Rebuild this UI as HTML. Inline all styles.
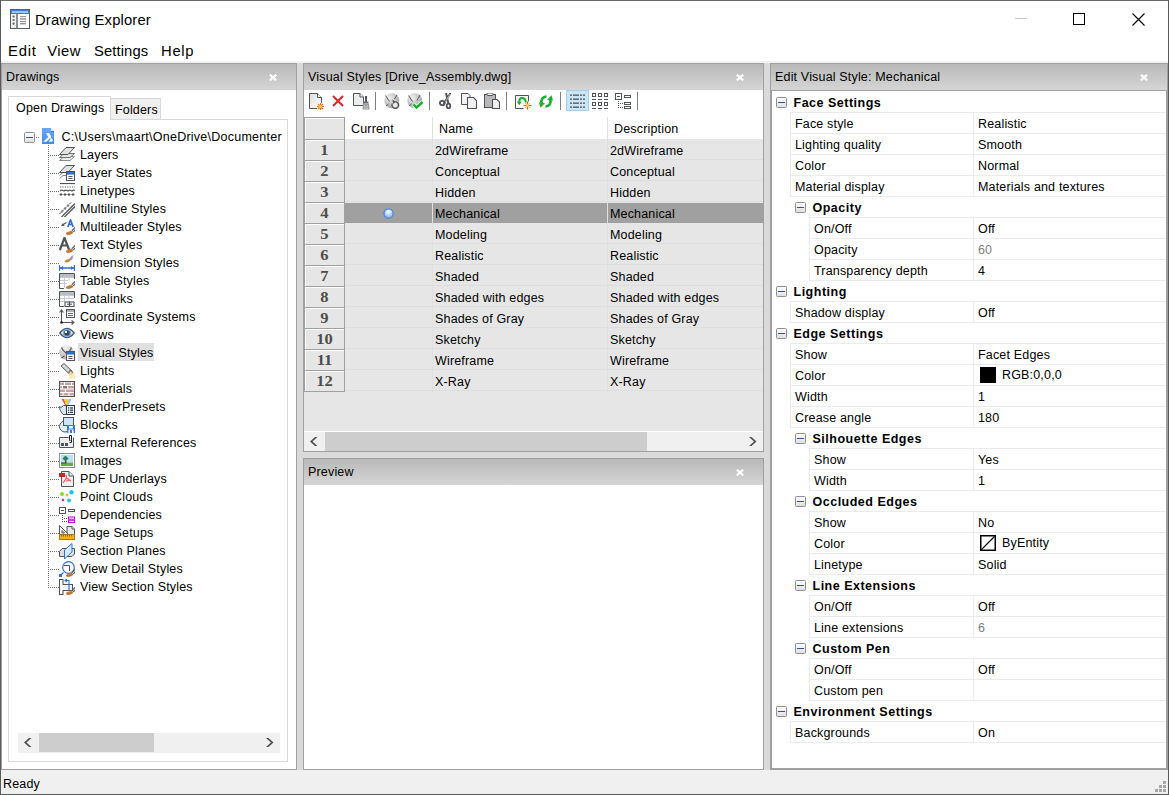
<!DOCTYPE html>
<html><head><meta charset="utf-8"><style>
html,body{margin:0;padding:0;width:1169px;height:795px;overflow:hidden;background:#fff;}
body{position:relative;font-family:"Liberation Sans", sans-serif;}
div{position:absolute;}
.t{white-space:nowrap;}
</style></head><body>
<div style="left:0px;top:0px;width:1169px;height:795px;background:#fff;"></div>
<svg style="position:absolute;left:10px;top:9px" width="20" height="20" viewBox="0 0 20 20"><rect x="0.5" y="0.5" width="19" height="19" fill="#f0f0f0" stroke="#5a5f63"/>
<rect x="1" y="1" width="18" height="4" fill="#3d7fd9"/><rect x="2" y="2" width="16" height="2" fill="#9cc2f5"/>
<rect x="6" y="5" width="2" height="14" fill="#8a8f93"/><rect x="8" y="5" width="11" height="14" fill="#fff"/>
<circle cx="3.6" cy="7.5" r="1.1" fill="#5a5f63"/><circle cx="3.6" cy="11" r="1.1" fill="#5a5f63"/><circle cx="3.6" cy="14.7" r="1.1" fill="#5a5f63"/>
<rect x="10" y="7" width="6" height="1.2" fill="#999"/><rect x="10" y="9.5" width="6" height="1" fill="#666"/><rect x="10" y="12" width="6" height="1.2" fill="#999"/><rect x="10" y="14.3" width="6" height="1" fill="#666"/></svg>
<div class="t" style="left:35px;top:13.47px;font-size:14.8px;line-height:14.8px;color:#000;letter-spacing:0.15px;font-family:"Liberation Sans", sans-serif;">Drawing Explorer</div>
<div style="left:1015px;top:18px;width:12px;height:1px;background:#c6c6c6;"></div>
<div style="left:1073px;top:13px;width:12px;height:12px;background:transparent;border:1px solid #000;box-sizing:border-box;"></div>
<svg style="position:absolute;left:1132px;top:13px" width="13" height="13" viewBox="0 0 13 13"><path d="M0.5 0.5 L12.5 12.5 M12.5 0.5 L0.5 12.5" stroke="#000" stroke-width="1.1"/></svg>
<div class="t" style="left:8px;top:44.07px;font-size:14.8px;line-height:14.8px;color:#000;letter-spacing:0.8px;font-family:"Liberation Sans", sans-serif;">Edit</div>
<div class="t" style="left:47.2px;top:44.07px;font-size:14.8px;line-height:14.8px;color:#000;letter-spacing:0.5px;font-family:"Liberation Sans", sans-serif;">View</div>
<div class="t" style="left:94px;top:44.07px;font-size:14.8px;line-height:14.8px;color:#000;letter-spacing:0.1px;font-family:"Liberation Sans", sans-serif;">Settings</div>
<div class="t" style="left:161px;top:44.07px;font-size:14.8px;line-height:14.8px;color:#000;letter-spacing:0.7px;font-family:"Liberation Sans", sans-serif;">Help</div>
<div style="left:0px;top:61px;width:1169px;height:2px;background:#f2f2f2;"></div>
<div style="left:0px;top:63px;width:1169px;height:707px;background:#dadada;"></div>
<div style="left:0px;top:770px;width:1169px;height:24px;background:#f0f0f0;"></div>
<div class="t" style="left:3px;top:778.22px;font-size:12.5px;line-height:12.5px;color:#000;letter-spacing:0.17px;font-family:"Liberation Sans", sans-serif;">Ready</div>
<div style="left:1163px;top:781px;width:3px;height:3px;background:#a8a8a8;"></div>
<div style="left:1159px;top:785px;width:3px;height:3px;background:#a8a8a8;"></div>
<div style="left:1163px;top:785px;width:3px;height:3px;background:#a8a8a8;"></div>
<div style="left:1155px;top:789px;width:3px;height:3px;background:#a8a8a8;"></div>
<div style="left:1159px;top:789px;width:3px;height:3px;background:#a8a8a8;"></div>
<div style="left:1163px;top:789px;width:3px;height:3px;background:#a8a8a8;"></div>
<div style="left:0px;top:0px;width:1169px;height:1px;background:#6b6b6b;"></div>
<div style="left:0px;top:0px;width:1px;height:795px;background:#5a5a5a;"></div>
<div style="left:1168px;top:0px;width:1px;height:795px;background:#5a5a5a;"></div>
<div style="left:0px;top:794px;width:1169px;height:1px;background:#5a5a5a;"></div>
<div style="left:1px;top:63px;width:296px;height:707px;background:#a0a0a0;"></div>
<div style="left:2px;top:63px;width:294px;height:706px;background:#fff;"></div>
<div style="left:2px;top:63px;width:294px;height:1px;background:#a0a0a0;"></div>
<div style="left:2px;top:64px;width:294px;height:26px;background:linear-gradient(#b9b9b9,#d5d5d5);"></div>
<div class="t" style="left:6px;top:71.42px;font-size:12.5px;line-height:12.5px;color:#000;letter-spacing:0.17px;font-family:"Liberation Sans", sans-serif;">Drawings</div>
<svg style="position:absolute;left:269px;top:74px" width="8" height="7" viewBox="0 0 8 7"><path d="M0.8 0.6 L7.2 6.4 M7.2 0.6 L0.8 6.4" stroke="#fff" stroke-width="2.1"/></svg>
<div style="left:8px;top:119px;width:280px;height:643px;background:#fff;border:1px solid #d9d9d9;box-sizing:border-box;"></div>
<div style="left:110px;top:98px;width:51px;height:22px;background:#f0f0f0;border:1px solid #d9d9d9;box-sizing:border-box;"></div>
<div style="left:8px;top:96px;width:103px;height:24px;background:#fff;border:1px solid #d9d9d9;border-bottom:none;box-sizing:border-box;"></div>
<div class="t" style="left:16px;top:102.02px;font-size:12.5px;line-height:12.5px;color:#000;letter-spacing:0.17px;font-family:"Liberation Sans", sans-serif;">Open Drawings</div>
<div class="t" style="left:115px;top:104.32px;font-size:12.5px;line-height:12.5px;color:#000;letter-spacing:0.17px;font-family:"Liberation Sans", sans-serif;">Folders</div>
<div style="left:24px;top:132px;width:11px;height:11px;background:linear-gradient(#fdfdfd,#e0e0e0);border:1px solid #8f8f8f;border-radius:1.5px;box-sizing:border-box;"></div>
<div style="left:26px;top:137px;width:7px;height:1.3px;background:#3b4da0;"></div>
<div style="left:36px;top:137px;width:1px;height:1px;background:#808080;"></div>
<div style="left:38px;top:137px;width:1px;height:1px;background:#808080;"></div>
<svg style="position:absolute;left:42px;top:128px" width="12" height="16" viewBox="0 0 12 16"><defs><linearGradient id="bg1" x1="0" y1="0" x2="0" y2="1"><stop offset="0" stop-color="#69a6f7"/><stop offset="1" stop-color="#3f8cf2"/></linearGradient></defs><path d="M0 0 H9 L12 3 V16 H0 Z" fill="url(#bg1)"/><path d="M9 0 L12 3 H9 Z" fill="#f4efe6"/><path d="M9 3 H12 V4 H9 Z" fill="#2f7ae8"/><path d="M4 5 L7.3 5 L9.3 9 L4.4 13.8 L1.2 13.8 L6.3 9 Z" fill="#fff"/><path d="M8.3 10.5 L10 10.5 L10.8 12.5 L10 13.8 L7 13.8 Z" fill="#fff"/></svg>
<div class="t" style="left:61.5px;top:130.82px;font-size:12.5px;line-height:12.5px;color:#000;letter-spacing:0.25px;font-family:"Liberation Sans", sans-serif;">C:\Users\maart\OneDrive\Documenter</div>
<svg style="position:absolute;left:48px;top:145px" width="1" height="443" viewBox="0 0 1 443"><g fill="#707070"><rect x="0" y="0" width="1" height="1"/><rect x="0" y="2" width="1" height="1"/><rect x="0" y="4" width="1" height="1"/><rect x="0" y="6" width="1" height="1"/><rect x="0" y="8" width="1" height="1"/><rect x="0" y="10" width="1" height="1"/><rect x="0" y="12" width="1" height="1"/><rect x="0" y="14" width="1" height="1"/><rect x="0" y="16" width="1" height="1"/><rect x="0" y="18" width="1" height="1"/><rect x="0" y="20" width="1" height="1"/><rect x="0" y="22" width="1" height="1"/><rect x="0" y="24" width="1" height="1"/><rect x="0" y="26" width="1" height="1"/><rect x="0" y="28" width="1" height="1"/><rect x="0" y="30" width="1" height="1"/><rect x="0" y="32" width="1" height="1"/><rect x="0" y="34" width="1" height="1"/><rect x="0" y="36" width="1" height="1"/><rect x="0" y="38" width="1" height="1"/><rect x="0" y="40" width="1" height="1"/><rect x="0" y="42" width="1" height="1"/><rect x="0" y="44" width="1" height="1"/><rect x="0" y="46" width="1" height="1"/><rect x="0" y="48" width="1" height="1"/><rect x="0" y="50" width="1" height="1"/><rect x="0" y="52" width="1" height="1"/><rect x="0" y="54" width="1" height="1"/><rect x="0" y="56" width="1" height="1"/><rect x="0" y="58" width="1" height="1"/><rect x="0" y="60" width="1" height="1"/><rect x="0" y="62" width="1" height="1"/><rect x="0" y="64" width="1" height="1"/><rect x="0" y="66" width="1" height="1"/><rect x="0" y="68" width="1" height="1"/><rect x="0" y="70" width="1" height="1"/><rect x="0" y="72" width="1" height="1"/><rect x="0" y="74" width="1" height="1"/><rect x="0" y="76" width="1" height="1"/><rect x="0" y="78" width="1" height="1"/><rect x="0" y="80" width="1" height="1"/><rect x="0" y="82" width="1" height="1"/><rect x="0" y="84" width="1" height="1"/><rect x="0" y="86" width="1" height="1"/><rect x="0" y="88" width="1" height="1"/><rect x="0" y="90" width="1" height="1"/><rect x="0" y="92" width="1" height="1"/><rect x="0" y="94" width="1" height="1"/><rect x="0" y="96" width="1" height="1"/><rect x="0" y="98" width="1" height="1"/><rect x="0" y="100" width="1" height="1"/><rect x="0" y="102" width="1" height="1"/><rect x="0" y="104" width="1" height="1"/><rect x="0" y="106" width="1" height="1"/><rect x="0" y="108" width="1" height="1"/><rect x="0" y="110" width="1" height="1"/><rect x="0" y="112" width="1" height="1"/><rect x="0" y="114" width="1" height="1"/><rect x="0" y="116" width="1" height="1"/><rect x="0" y="118" width="1" height="1"/><rect x="0" y="120" width="1" height="1"/><rect x="0" y="122" width="1" height="1"/><rect x="0" y="124" width="1" height="1"/><rect x="0" y="126" width="1" height="1"/><rect x="0" y="128" width="1" height="1"/><rect x="0" y="130" width="1" height="1"/><rect x="0" y="132" width="1" height="1"/><rect x="0" y="134" width="1" height="1"/><rect x="0" y="136" width="1" height="1"/><rect x="0" y="138" width="1" height="1"/><rect x="0" y="140" width="1" height="1"/><rect x="0" y="142" width="1" height="1"/><rect x="0" y="144" width="1" height="1"/><rect x="0" y="146" width="1" height="1"/><rect x="0" y="148" width="1" height="1"/><rect x="0" y="150" width="1" height="1"/><rect x="0" y="152" width="1" height="1"/><rect x="0" y="154" width="1" height="1"/><rect x="0" y="156" width="1" height="1"/><rect x="0" y="158" width="1" height="1"/><rect x="0" y="160" width="1" height="1"/><rect x="0" y="162" width="1" height="1"/><rect x="0" y="164" width="1" height="1"/><rect x="0" y="166" width="1" height="1"/><rect x="0" y="168" width="1" height="1"/><rect x="0" y="170" width="1" height="1"/><rect x="0" y="172" width="1" height="1"/><rect x="0" y="174" width="1" height="1"/><rect x="0" y="176" width="1" height="1"/><rect x="0" y="178" width="1" height="1"/><rect x="0" y="180" width="1" height="1"/><rect x="0" y="182" width="1" height="1"/><rect x="0" y="184" width="1" height="1"/><rect x="0" y="186" width="1" height="1"/><rect x="0" y="188" width="1" height="1"/><rect x="0" y="190" width="1" height="1"/><rect x="0" y="192" width="1" height="1"/><rect x="0" y="194" width="1" height="1"/><rect x="0" y="196" width="1" height="1"/><rect x="0" y="198" width="1" height="1"/><rect x="0" y="200" width="1" height="1"/><rect x="0" y="202" width="1" height="1"/><rect x="0" y="204" width="1" height="1"/><rect x="0" y="206" width="1" height="1"/><rect x="0" y="208" width="1" height="1"/><rect x="0" y="210" width="1" height="1"/><rect x="0" y="212" width="1" height="1"/><rect x="0" y="214" width="1" height="1"/><rect x="0" y="216" width="1" height="1"/><rect x="0" y="218" width="1" height="1"/><rect x="0" y="220" width="1" height="1"/><rect x="0" y="222" width="1" height="1"/><rect x="0" y="224" width="1" height="1"/><rect x="0" y="226" width="1" height="1"/><rect x="0" y="228" width="1" height="1"/><rect x="0" y="230" width="1" height="1"/><rect x="0" y="232" width="1" height="1"/><rect x="0" y="234" width="1" height="1"/><rect x="0" y="236" width="1" height="1"/><rect x="0" y="238" width="1" height="1"/><rect x="0" y="240" width="1" height="1"/><rect x="0" y="242" width="1" height="1"/><rect x="0" y="244" width="1" height="1"/><rect x="0" y="246" width="1" height="1"/><rect x="0" y="248" width="1" height="1"/><rect x="0" y="250" width="1" height="1"/><rect x="0" y="252" width="1" height="1"/><rect x="0" y="254" width="1" height="1"/><rect x="0" y="256" width="1" height="1"/><rect x="0" y="258" width="1" height="1"/><rect x="0" y="260" width="1" height="1"/><rect x="0" y="262" width="1" height="1"/><rect x="0" y="264" width="1" height="1"/><rect x="0" y="266" width="1" height="1"/><rect x="0" y="268" width="1" height="1"/><rect x="0" y="270" width="1" height="1"/><rect x="0" y="272" width="1" height="1"/><rect x="0" y="274" width="1" height="1"/><rect x="0" y="276" width="1" height="1"/><rect x="0" y="278" width="1" height="1"/><rect x="0" y="280" width="1" height="1"/><rect x="0" y="282" width="1" height="1"/><rect x="0" y="284" width="1" height="1"/><rect x="0" y="286" width="1" height="1"/><rect x="0" y="288" width="1" height="1"/><rect x="0" y="290" width="1" height="1"/><rect x="0" y="292" width="1" height="1"/><rect x="0" y="294" width="1" height="1"/><rect x="0" y="296" width="1" height="1"/><rect x="0" y="298" width="1" height="1"/><rect x="0" y="300" width="1" height="1"/><rect x="0" y="302" width="1" height="1"/><rect x="0" y="304" width="1" height="1"/><rect x="0" y="306" width="1" height="1"/><rect x="0" y="308" width="1" height="1"/><rect x="0" y="310" width="1" height="1"/><rect x="0" y="312" width="1" height="1"/><rect x="0" y="314" width="1" height="1"/><rect x="0" y="316" width="1" height="1"/><rect x="0" y="318" width="1" height="1"/><rect x="0" y="320" width="1" height="1"/><rect x="0" y="322" width="1" height="1"/><rect x="0" y="324" width="1" height="1"/><rect x="0" y="326" width="1" height="1"/><rect x="0" y="328" width="1" height="1"/><rect x="0" y="330" width="1" height="1"/><rect x="0" y="332" width="1" height="1"/><rect x="0" y="334" width="1" height="1"/><rect x="0" y="336" width="1" height="1"/><rect x="0" y="338" width="1" height="1"/><rect x="0" y="340" width="1" height="1"/><rect x="0" y="342" width="1" height="1"/><rect x="0" y="344" width="1" height="1"/><rect x="0" y="346" width="1" height="1"/><rect x="0" y="348" width="1" height="1"/><rect x="0" y="350" width="1" height="1"/><rect x="0" y="352" width="1" height="1"/><rect x="0" y="354" width="1" height="1"/><rect x="0" y="356" width="1" height="1"/><rect x="0" y="358" width="1" height="1"/><rect x="0" y="360" width="1" height="1"/><rect x="0" y="362" width="1" height="1"/><rect x="0" y="364" width="1" height="1"/><rect x="0" y="366" width="1" height="1"/><rect x="0" y="368" width="1" height="1"/><rect x="0" y="370" width="1" height="1"/><rect x="0" y="372" width="1" height="1"/><rect x="0" y="374" width="1" height="1"/><rect x="0" y="376" width="1" height="1"/><rect x="0" y="378" width="1" height="1"/><rect x="0" y="380" width="1" height="1"/><rect x="0" y="382" width="1" height="1"/><rect x="0" y="384" width="1" height="1"/><rect x="0" y="386" width="1" height="1"/><rect x="0" y="388" width="1" height="1"/><rect x="0" y="390" width="1" height="1"/><rect x="0" y="392" width="1" height="1"/><rect x="0" y="394" width="1" height="1"/><rect x="0" y="396" width="1" height="1"/><rect x="0" y="398" width="1" height="1"/><rect x="0" y="400" width="1" height="1"/><rect x="0" y="402" width="1" height="1"/><rect x="0" y="404" width="1" height="1"/><rect x="0" y="406" width="1" height="1"/><rect x="0" y="408" width="1" height="1"/><rect x="0" y="410" width="1" height="1"/><rect x="0" y="412" width="1" height="1"/><rect x="0" y="414" width="1" height="1"/><rect x="0" y="416" width="1" height="1"/><rect x="0" y="418" width="1" height="1"/><rect x="0" y="420" width="1" height="1"/><rect x="0" y="422" width="1" height="1"/><rect x="0" y="424" width="1" height="1"/><rect x="0" y="426" width="1" height="1"/><rect x="0" y="428" width="1" height="1"/><rect x="0" y="430" width="1" height="1"/><rect x="0" y="432" width="1" height="1"/><rect x="0" y="434" width="1" height="1"/><rect x="0" y="436" width="1" height="1"/><rect x="0" y="438" width="1" height="1"/><rect x="0" y="440" width="1" height="1"/><rect x="0" y="442" width="1" height="1"/></g></svg>
<div style="left:50px;top:155px;width:1px;height:1px;background:#707070;"></div>
<div style="left:52px;top:155px;width:1px;height:1px;background:#707070;"></div>
<div style="left:54px;top:155px;width:1px;height:1px;background:#707070;"></div>
<div style="left:56px;top:155px;width:1px;height:1px;background:#707070;"></div>
<div style="left:58px;top:155px;width:1px;height:1px;background:#707070;"></div>
<svg style="position:absolute;left:59px;top:147px" width="16" height="16" viewBox="0 0 16 16"><path d="M0.5 13.5 L5 9.5 H15.5 L11 13.5 Z" fill="#ececec" stroke="#8a8d90"/><path d="M0.5 10.5 L5 6.5 H15.5 L11 10.5 Z" fill="#e6e6e6" stroke="#6f7276"/><path d="M0.5 7.5 L7 0.5 H15.5 L9 7.5 Z" fill="#e2e2e2" stroke="#505459"/></svg>
<div class="t" style="left:80px;top:149.42px;font-size:12.5px;line-height:12.5px;color:#000;letter-spacing:0.17px;font-family:"Liberation Sans", sans-serif;">Layers</div>
<div style="left:50px;top:173px;width:1px;height:1px;background:#707070;"></div>
<div style="left:52px;top:173px;width:1px;height:1px;background:#707070;"></div>
<div style="left:54px;top:173px;width:1px;height:1px;background:#707070;"></div>
<div style="left:56px;top:173px;width:1px;height:1px;background:#707070;"></div>
<div style="left:58px;top:173px;width:1px;height:1px;background:#707070;"></div>
<svg style="position:absolute;left:59px;top:165px" width="16" height="16" viewBox="0 0 16 16"><path d="M0.5 13.5 L4 10.5 H7 M0.5 10.5 L4 7.5 H7" fill="none" stroke="#8a8d90"/><path d="M0.5 7.5 L7 0.5 H15.5 L9 7.5 Z" fill="#e2e2e2" stroke="#505459"/><rect x="7.5" y="6.5" width="8" height="9" fill="#fff" stroke="#505459"/><rect x="8" y="7" width="7" height="2.6" fill="#2f73d6"/><path d="M9.5 11.5 H13.5 M9.5 13.5 H13.5" stroke="#505459" stroke-width="1"/></svg>
<div class="t" style="left:80px;top:167.42px;font-size:12.5px;line-height:12.5px;color:#000;letter-spacing:0.17px;font-family:"Liberation Sans", sans-serif;">Layer States</div>
<div style="left:50px;top:191px;width:1px;height:1px;background:#707070;"></div>
<div style="left:52px;top:191px;width:1px;height:1px;background:#707070;"></div>
<div style="left:54px;top:191px;width:1px;height:1px;background:#707070;"></div>
<div style="left:56px;top:191px;width:1px;height:1px;background:#707070;"></div>
<div style="left:58px;top:191px;width:1px;height:1px;background:#707070;"></div>
<svg style="position:absolute;left:59px;top:183px" width="16" height="16" viewBox="0 0 16 16"><path d="M1 0.5 H16" stroke="#505459" stroke-width="1.2"/><path d="M1 4 H16" stroke="#505459" stroke-dasharray="1.2 1.2"/><path d="M1 8 Q2.5 6.5 4 7.5 L5 8 Q6.5 6.5 8 7.5 L9 8 Q10.5 6.5 12 7.5 L13 8 Q14.5 6.5 16 7.5" fill="none" stroke="#505459" stroke-width="1.1"/><path d="M2 10 V13 M0.5 11.5 H3.5 M6 10 V13 M4.5 11.5 H7.5 M10 10 V13 M8.5 11.5 H11.5 M14 10 V13 M12.5 11.5 H15.5" stroke="#505459" stroke-width="1.1"/></svg>
<div class="t" style="left:80px;top:185.42px;font-size:12.5px;line-height:12.5px;color:#000;letter-spacing:0.17px;font-family:"Liberation Sans", sans-serif;">Linetypes</div>
<div style="left:50px;top:209px;width:1px;height:1px;background:#707070;"></div>
<div style="left:52px;top:209px;width:1px;height:1px;background:#707070;"></div>
<div style="left:54px;top:209px;width:1px;height:1px;background:#707070;"></div>
<div style="left:56px;top:209px;width:1px;height:1px;background:#707070;"></div>
<div style="left:58px;top:209px;width:1px;height:1px;background:#707070;"></div>
<svg style="position:absolute;left:59px;top:201px" width="16" height="16" viewBox="0 0 16 16"><path d="M0.5 13 L13 0.5" stroke="#505459" stroke-width="1" stroke-dasharray="2.5 1"/><circle cx="3" cy="10.5" r="0.9" fill="none" stroke="#505459" stroke-width="0.6"/><circle cx="6" cy="7.5" r="0.9" fill="none" stroke="#505459" stroke-width="0.6"/><circle cx="9" cy="4.5" r="0.9" fill="none" stroke="#505459" stroke-width="0.6"/><path d="M2.5 16 L16 2.5" stroke="#505459" stroke-width="1.3"/><path d="M5 16.5 L16.5 5" stroke="#505459" stroke-width="1.3"/></svg>
<div class="t" style="left:80px;top:203.42px;font-size:12.5px;line-height:12.5px;color:#000;letter-spacing:0.17px;font-family:"Liberation Sans", sans-serif;">Multiline Styles</div>
<div style="left:50px;top:227px;width:1px;height:1px;background:#707070;"></div>
<div style="left:52px;top:227px;width:1px;height:1px;background:#707070;"></div>
<div style="left:54px;top:227px;width:1px;height:1px;background:#707070;"></div>
<div style="left:56px;top:227px;width:1px;height:1px;background:#707070;"></div>
<div style="left:58px;top:227px;width:1px;height:1px;background:#707070;"></div>
<svg style="position:absolute;left:59px;top:219px" width="16" height="16" viewBox="0 0 16 16"><path d="M3.5 6 L7.5 3.5" stroke="#505459" stroke-width="1.1"/><path d="M2 7 L5.5 6.8 L3.8 4 Z" fill="#505459"/><path d="M8.8 8 L11.5 1 L14.2 8 M9.8 5.5 H13.2" stroke="#2f6fd3" stroke-width="1.7" fill="none"/><path d="M13 11.5 L16.5 8 M14.3 12.8 L16.5 10.6" stroke="#505459" stroke-width="1.1"/><path d="M8.5 15.8 C6.5 15.8 6.5 14 7.8 13.2 C9.2 12.3 11 12.5 12.2 11.2 L14.3 13.2 C13.6 15 11.5 15.9 8.5 15.8 Z" fill="#c8843c"/><path d="M8 15.2 C10 15 12 14.5 13.5 13" stroke="#a0622a" stroke-width="0.7" fill="none"/></svg>
<div class="t" style="left:80px;top:221.42px;font-size:12.5px;line-height:12.5px;color:#000;letter-spacing:0.17px;font-family:"Liberation Sans", sans-serif;">Multileader Styles</div>
<div style="left:50px;top:245px;width:1px;height:1px;background:#707070;"></div>
<div style="left:52px;top:245px;width:1px;height:1px;background:#707070;"></div>
<div style="left:54px;top:245px;width:1px;height:1px;background:#707070;"></div>
<div style="left:56px;top:245px;width:1px;height:1px;background:#707070;"></div>
<div style="left:58px;top:245px;width:1px;height:1px;background:#707070;"></div>
<svg style="position:absolute;left:59px;top:237px" width="16" height="16" viewBox="0 0 16 16"><path d="M0.8 13 L5.5 0.8 L10.2 13 M2.8 8.5 H8.2" stroke="#505459" stroke-width="2.2" fill="none"/><path d="M13 11.5 L16.5 8 M14.3 12.8 L16.5 10.6" stroke="#505459" stroke-width="1.1"/><path d="M8.5 15.8 C6.5 15.8 6.5 14 7.8 13.2 C9.2 12.3 11 12.5 12.2 11.2 L14.3 13.2 C13.6 15 11.5 15.9 8.5 15.8 Z" fill="#c8843c"/><path d="M8 15.2 C10 15 12 14.5 13.5 13" stroke="#a0622a" stroke-width="0.7" fill="none"/></svg>
<div class="t" style="left:80px;top:239.42px;font-size:12.5px;line-height:12.5px;color:#000;letter-spacing:0.17px;font-family:"Liberation Sans", sans-serif;">Text Styles</div>
<div style="left:50px;top:263px;width:1px;height:1px;background:#707070;"></div>
<div style="left:52px;top:263px;width:1px;height:1px;background:#707070;"></div>
<div style="left:54px;top:263px;width:1px;height:1px;background:#707070;"></div>
<div style="left:56px;top:263px;width:1px;height:1px;background:#707070;"></div>
<div style="left:58px;top:263px;width:1px;height:1px;background:#707070;"></div>
<svg style="position:absolute;left:59px;top:255px" width="16" height="16" viewBox="0 0 16 16"><path d="M0.5 10 V16 M15.5 10 V16 M1 13 H15" stroke="#2f6fd3" stroke-width="1.3"/><path d="M1 13 L4 11 V15 Z M15 13 L12 11 V15 Z" fill="#2f6fd3"/><path d="M7.5 7.5 C6 7.5 5.5 6 6.5 5.2 C7.5 4.3 9.2 4.6 10.3 3.8 L11.6 5 C11 6.6 9.5 7.5 7.5 7.5 Z" fill="#c8843c"/><path d="M10.5 4.2 L14 0.5 M11.5 5 L14 2.5" stroke="#505459"/></svg>
<div class="t" style="left:80px;top:257.42px;font-size:12.5px;line-height:12.5px;color:#000;letter-spacing:0.17px;font-family:"Liberation Sans", sans-serif;">Dimension Styles</div>
<div style="left:50px;top:281px;width:1px;height:1px;background:#707070;"></div>
<div style="left:52px;top:281px;width:1px;height:1px;background:#707070;"></div>
<div style="left:54px;top:281px;width:1px;height:1px;background:#707070;"></div>
<div style="left:56px;top:281px;width:1px;height:1px;background:#707070;"></div>
<div style="left:58px;top:281px;width:1px;height:1px;background:#707070;"></div>
<svg style="position:absolute;left:59px;top:273px" width="16" height="16" viewBox="0 0 16 16"><path d="M0.5 15.5 V0.5 H15.5 V6" fill="none" stroke="#505459"/><rect x="1" y="1" width="14" height="3" fill="#b9bdc2"/><path d="M1 4.5 H15 M1 7.5 H9 M1 10.5 H8 M5.5 5 V15 M10 5 V8" stroke="#c5ccd6"/><path d="M0.5 15.5 H5" stroke="#505459"/><path d="M13 11.5 L16.5 8 M14.3 12.8 L16.5 10.6" stroke="#505459" stroke-width="1.1"/><path d="M8.5 15.8 C6.5 15.8 6.5 14 7.8 13.2 C9.2 12.3 11 12.5 12.2 11.2 L14.3 13.2 C13.6 15 11.5 15.9 8.5 15.8 Z" fill="#c8843c"/><path d="M8 15.2 C10 15 12 14.5 13.5 13" stroke="#a0622a" stroke-width="0.7" fill="none"/></svg>
<div class="t" style="left:80px;top:275.42px;font-size:12.5px;line-height:12.5px;color:#000;letter-spacing:0.17px;font-family:"Liberation Sans", sans-serif;">Table Styles</div>
<div style="left:50px;top:299px;width:1px;height:1px;background:#707070;"></div>
<div style="left:52px;top:299px;width:1px;height:1px;background:#707070;"></div>
<div style="left:54px;top:299px;width:1px;height:1px;background:#707070;"></div>
<div style="left:56px;top:299px;width:1px;height:1px;background:#707070;"></div>
<div style="left:58px;top:299px;width:1px;height:1px;background:#707070;"></div>
<svg style="position:absolute;left:59px;top:291px" width="16" height="16" viewBox="0 0 16 16"><path d="M0.5 15.5 V0.5 H15.5 V7" fill="none" stroke="#505459"/><rect x="1" y="1" width="14" height="3" fill="#b9bdc2"/><path d="M1 4.5 H15 M1 7.5 H15 M1 10.5 H6 M5.5 5 V11 M10 5 V8" stroke="#c5ccd6"/><path d="M0.5 15.5 H5" stroke="#505459"/><rect x="6" y="11" width="4.5" height="4.5" fill="none" stroke="#505459" stroke-width="1.1"/><rect x="10.5" y="11" width="4.5" height="4.5" fill="none" stroke="#505459" stroke-width="1.1"/><path d="M8 13.2 H13" stroke="#505459"/></svg>
<div class="t" style="left:80px;top:293.42px;font-size:12.5px;line-height:12.5px;color:#000;letter-spacing:0.17px;font-family:"Liberation Sans", sans-serif;">Datalinks</div>
<div style="left:50px;top:317px;width:1px;height:1px;background:#707070;"></div>
<div style="left:52px;top:317px;width:1px;height:1px;background:#707070;"></div>
<div style="left:54px;top:317px;width:1px;height:1px;background:#707070;"></div>
<div style="left:56px;top:317px;width:1px;height:1px;background:#707070;"></div>
<div style="left:58px;top:317px;width:1px;height:1px;background:#707070;"></div>
<svg style="position:absolute;left:59px;top:309px" width="16" height="16" viewBox="0 0 16 16"><path d="M2.5 13.5 V1.5 M0.5 3.5 L2.5 1 L4.5 3.5 M2.5 13.5 H15 M12.5 11.5 L15 13.5 L12.5 15.5" fill="none" stroke="#505459" stroke-width="1.1"/><circle cx="2.5" cy="13.5" r="1.3" fill="#222"/><rect x="7.5" y="0.5" width="8" height="8" fill="#fff" stroke="#505459"/><path d="M8 2 H15 M9 4.5 H14 M9 6.5 H14" stroke="#505459" stroke-width="0.9"/></svg>
<div class="t" style="left:80px;top:311.42px;font-size:12.5px;line-height:12.5px;color:#000;letter-spacing:0.17px;font-family:"Liberation Sans", sans-serif;">Coordinate Systems</div>
<div style="left:50px;top:335px;width:1px;height:1px;background:#707070;"></div>
<div style="left:52px;top:335px;width:1px;height:1px;background:#707070;"></div>
<div style="left:54px;top:335px;width:1px;height:1px;background:#707070;"></div>
<div style="left:56px;top:335px;width:1px;height:1px;background:#707070;"></div>
<div style="left:58px;top:335px;width:1px;height:1px;background:#707070;"></div>
<svg style="position:absolute;left:59px;top:327px" width="16" height="16" viewBox="0 0 16 16"><path d="M0.8 6 Q8 -3 15.2 6 Q8 15 0.8 6 Z" fill="#f2f2f2" stroke="#505459" stroke-width="1.3"/><circle cx="8" cy="6" r="3.5" fill="#3c464f" stroke="#6ab0f5" stroke-width="1.5"/><path d="M6 4 H8 V6 H6 Z" fill="#fff"/></svg>
<div class="t" style="left:80px;top:329.42px;font-size:12.5px;line-height:12.5px;color:#000;letter-spacing:0.17px;font-family:"Liberation Sans", sans-serif;">Views</div>
<div style="left:50px;top:353px;width:1px;height:1px;background:#707070;"></div>
<div style="left:52px;top:353px;width:1px;height:1px;background:#707070;"></div>
<div style="left:54px;top:353px;width:1px;height:1px;background:#707070;"></div>
<div style="left:56px;top:353px;width:1px;height:1px;background:#707070;"></div>
<div style="left:58px;top:353px;width:1px;height:1px;background:#707070;"></div>
<svg style="position:absolute;left:59px;top:345px" width="16" height="16" viewBox="0 0 16 16"><defs><radialGradient id="vsg" cx="0.45" cy="0.2" r="0.8"><stop offset="0" stop-color="#f2f2f2"/><stop offset="1" stop-color="#b4b4b4"/></radialGradient></defs><circle cx="7.5" cy="7.5" r="7.3" fill="url(#vsg)"/><path d="M2.5 2.5 Q4 6 7.5 8.5 M12.5 2.5 Q12 4 10.5 6 M2.5 13 Q4 12 5.5 11" stroke="#505459" stroke-width="1.1" fill="none"/><rect x="7.5" y="6.5" width="8" height="9" fill="#fff" stroke="#505459"/><rect x="8" y="7" width="7" height="2.6" fill="#2f73d6"/><path d="M9.5 11.5 H13.5 M9.5 13.5 H13.5" stroke="#505459" stroke-width="1"/></svg>
<div style="left:78px;top:343px;width:76px;height:18px;background:#e0e0e0;"></div>
<div class="t" style="left:80px;top:347.42px;font-size:12.5px;line-height:12.5px;color:#000;letter-spacing:0.17px;font-family:"Liberation Sans", sans-serif;">Visual Styles</div>
<div style="left:50px;top:371px;width:1px;height:1px;background:#707070;"></div>
<div style="left:52px;top:371px;width:1px;height:1px;background:#707070;"></div>
<div style="left:54px;top:371px;width:1px;height:1px;background:#707070;"></div>
<div style="left:56px;top:371px;width:1px;height:1px;background:#707070;"></div>
<div style="left:58px;top:371px;width:1px;height:1px;background:#707070;"></div>
<svg style="position:absolute;left:59px;top:363px" width="16" height="16" viewBox="0 0 16 16"><path d="M2 3 L5 0.5 L13 8 L10.5 11 Z" fill="#d5d8dc" stroke="#5d6166"/><ellipse cx="11.8" cy="9.5" rx="1.6" ry="2" transform="rotate(-45 11.8 9.5)" fill="#f5d66b" stroke="#5d6166"/><rect x="10" y="10" width="6" height="6" fill="#fde7b5" opacity="0.8"/></svg>
<div class="t" style="left:80px;top:365.42px;font-size:12.5px;line-height:12.5px;color:#000;letter-spacing:0.17px;font-family:"Liberation Sans", sans-serif;">Lights</div>
<div style="left:50px;top:389px;width:1px;height:1px;background:#707070;"></div>
<div style="left:52px;top:389px;width:1px;height:1px;background:#707070;"></div>
<div style="left:54px;top:389px;width:1px;height:1px;background:#707070;"></div>
<div style="left:56px;top:389px;width:1px;height:1px;background:#707070;"></div>
<div style="left:58px;top:389px;width:1px;height:1px;background:#707070;"></div>
<svg style="position:absolute;left:59px;top:381px" width="16" height="16" viewBox="0 0 16 16"><rect x="0.5" y="0.5" width="15" height="15" fill="#fff" stroke="#505459"/><g fill="#c9a3a3"><rect x="1" y="1.5" width="4" height="2.5"/><rect x="6" y="1.5" width="6" height="2.5"/><rect x="13" y="1.5" width="2" height="2.5"/><rect x="1" y="5" width="2" height="2.5"/><rect x="9" y="5" width="6" height="2.5"/><rect x="1" y="8.5" width="5" height="2.5"/><rect x="7" y="8.5" width="8" height="2.5"/><rect x="1" y="12" width="2.5" height="2.5"/><rect x="4.5" y="12" width="5" height="2.5"/><rect x="10.5" y="12" width="4.5" height="2.5"/></g><rect x="4" y="5" width="4" height="2.5" fill="#9c6f6f"/></svg>
<div class="t" style="left:80px;top:383.42px;font-size:12.5px;line-height:12.5px;color:#000;letter-spacing:0.17px;font-family:"Liberation Sans", sans-serif;">Materials</div>
<div style="left:50px;top:407px;width:1px;height:1px;background:#707070;"></div>
<div style="left:52px;top:407px;width:1px;height:1px;background:#707070;"></div>
<div style="left:54px;top:407px;width:1px;height:1px;background:#707070;"></div>
<div style="left:56px;top:407px;width:1px;height:1px;background:#707070;"></div>
<div style="left:58px;top:407px;width:1px;height:1px;background:#707070;"></div>
<svg style="position:absolute;left:59px;top:399px" width="16" height="16" viewBox="0 0 16 16"><path d="M2.5 0 L6 6 H7 L5 0 Z" fill="#f04848"/><path d="M5 0 L7 6 H8.5 L9.5 0 Z" fill="#f5d020"/><path d="M9.5 0 L8.5 6 H9.5 L12.5 0 Z" fill="#8fc0f5"/><path d="M0.5 7.5 L2 8.5 L4.5 6.5 L7.5 6.5 V15.5 H4 L1 11 Z" fill="#dfe8f3" stroke="#505459"/><rect x="7.5" y="6.5" width="8" height="9" fill="#fff" stroke="#2e3d52" stroke-width="1.1"/><g fill="#2e3d52"><rect x="9" y="8.3" width="1.3" height="1.3"/><rect x="11" y="8.3" width="3" height="1.3"/><rect x="9" y="10.5" width="1.3" height="1.3"/><rect x="11" y="10.5" width="3" height="1.3"/><rect x="9" y="12.7" width="1.3" height="1.3"/><rect x="11" y="12.7" width="3" height="1.3"/></g></svg>
<div class="t" style="left:80px;top:401.42px;font-size:12.5px;line-height:12.5px;color:#000;letter-spacing:0.17px;font-family:"Liberation Sans", sans-serif;">RenderPresets</div>
<div style="left:50px;top:425px;width:1px;height:1px;background:#707070;"></div>
<div style="left:52px;top:425px;width:1px;height:1px;background:#707070;"></div>
<div style="left:54px;top:425px;width:1px;height:1px;background:#707070;"></div>
<div style="left:56px;top:425px;width:1px;height:1px;background:#707070;"></div>
<div style="left:58px;top:425px;width:1px;height:1px;background:#707070;"></div>
<svg style="position:absolute;left:59px;top:417px" width="16" height="16" viewBox="0 0 16 16"><circle cx="6" cy="9.5" r="5.5" fill="#e6f0fb" stroke="#505459"/><rect x="4.5" y="0.5" width="10" height="8" fill="#cfe3fa" stroke="#505459"/><path d="M4.5 8.5 H9" stroke="#505459"/><rect x="8" y="8" width="8" height="8" fill="#2f7de0"/><rect x="10" y="9" width="4" height="2.5" fill="#fff"/><rect x="9.5" y="12.5" width="5" height="3.5" fill="#fff"/><rect x="11" y="13" width="2" height="3" fill="#2f7de0"/></svg>
<div class="t" style="left:80px;top:419.42px;font-size:12.5px;line-height:12.5px;color:#000;letter-spacing:0.17px;font-family:"Liberation Sans", sans-serif;">Blocks</div>
<div style="left:50px;top:443px;width:1px;height:1px;background:#707070;"></div>
<div style="left:52px;top:443px;width:1px;height:1px;background:#707070;"></div>
<div style="left:54px;top:443px;width:1px;height:1px;background:#707070;"></div>
<div style="left:56px;top:443px;width:1px;height:1px;background:#707070;"></div>
<div style="left:58px;top:443px;width:1px;height:1px;background:#707070;"></div>
<svg style="position:absolute;left:59px;top:435px" width="16" height="16" viewBox="0 0 16 16"><rect x="1" y="3" width="13" height="9" fill="#eceeef"/><path d="M0.5 2.5 H9.5 M14.5 2.5 V12.5 H0.5 V2.5" fill="none" stroke="#505459"/><rect x="2" y="8" width="3" height="3" fill="#505459"/><rect x="6" y="8" width="3" height="3" fill="#505459"/><path d="M10.5 7.5 H12.5 V0.5 H10.5 V5.5 H11.5" fill="none" stroke="#222" stroke-width="1"/></svg>
<div class="t" style="left:80px;top:437.42px;font-size:12.5px;line-height:12.5px;color:#000;letter-spacing:0.17px;font-family:"Liberation Sans", sans-serif;">External References</div>
<div style="left:50px;top:461px;width:1px;height:1px;background:#707070;"></div>
<div style="left:52px;top:461px;width:1px;height:1px;background:#707070;"></div>
<div style="left:54px;top:461px;width:1px;height:1px;background:#707070;"></div>
<div style="left:56px;top:461px;width:1px;height:1px;background:#707070;"></div>
<div style="left:58px;top:461px;width:1px;height:1px;background:#707070;"></div>
<svg style="position:absolute;left:59px;top:453px" width="16" height="16" viewBox="0 0 16 16"><rect x="0.5" y="0.5" width="15" height="14" fill="#fff" stroke="#8a8d90"/><rect x="2" y="2" width="12" height="7.5" fill="#b9e0f7"/><rect x="2" y="9.5" width="12" height="3.5" fill="#6aab4b"/><path d="M6.5 2.5 L9.5 5.5 L6.5 8.5 L3.5 5.5 Z" fill="#2e7d5b"/><rect x="6" y="8" width="1.5" height="2.5" fill="#7a2f2f"/><path d="M2 10 H6" stroke="#2b4f7a"/></svg>
<div class="t" style="left:80px;top:455.42px;font-size:12.5px;line-height:12.5px;color:#000;letter-spacing:0.17px;font-family:"Liberation Sans", sans-serif;">Images</div>
<div style="left:50px;top:479px;width:1px;height:1px;background:#707070;"></div>
<div style="left:52px;top:479px;width:1px;height:1px;background:#707070;"></div>
<div style="left:54px;top:479px;width:1px;height:1px;background:#707070;"></div>
<div style="left:56px;top:479px;width:1px;height:1px;background:#707070;"></div>
<div style="left:58px;top:479px;width:1px;height:1px;background:#707070;"></div>
<svg style="position:absolute;left:59px;top:471px" width="16" height="16" viewBox="0 0 16 16"><path d="M2.5 0.5 H10 L14.5 5 V15.5 H2.5 Z" fill="#f0f0f0" stroke="#505459"/><path d="M10 0.5 V5 H14.5" fill="#e8e8e8" stroke="#505459"/><rect x="0" y="2" width="6" height="4" fill="#c9262b"/><path d="M4 12 L7.5 7 L7 4 M7.5 7 L12 10 M7 10 L10.5 9.5" stroke="#f25a5a" stroke-width="1.2" fill="none"/></svg>
<div class="t" style="left:80px;top:473.42px;font-size:12.5px;line-height:12.5px;color:#000;letter-spacing:0.17px;font-family:"Liberation Sans", sans-serif;">PDF Underlays</div>
<div style="left:50px;top:497px;width:1px;height:1px;background:#707070;"></div>
<div style="left:52px;top:497px;width:1px;height:1px;background:#707070;"></div>
<div style="left:54px;top:497px;width:1px;height:1px;background:#707070;"></div>
<div style="left:56px;top:497px;width:1px;height:1px;background:#707070;"></div>
<div style="left:58px;top:497px;width:1px;height:1px;background:#707070;"></div>
<svg style="position:absolute;left:59px;top:489px" width="16" height="16" viewBox="0 0 16 16"><circle cx="3" cy="5" r="2" fill="#7fe01a"/><circle cx="12.5" cy="3.2" r="2.2" fill="#1ac6f5"/><circle cx="8" cy="6" r="1.4" fill="#f5b81a"/><circle cx="4" cy="11" r="1.3" fill="#f01ad0"/><circle cx="10" cy="11.5" r="2" fill="#1ac6f5"/></svg>
<div class="t" style="left:80px;top:491.42px;font-size:12.5px;line-height:12.5px;color:#000;letter-spacing:0.17px;font-family:"Liberation Sans", sans-serif;">Point Clouds</div>
<div style="left:50px;top:515px;width:1px;height:1px;background:#707070;"></div>
<div style="left:52px;top:515px;width:1px;height:1px;background:#707070;"></div>
<div style="left:54px;top:515px;width:1px;height:1px;background:#707070;"></div>
<div style="left:56px;top:515px;width:1px;height:1px;background:#707070;"></div>
<div style="left:58px;top:515px;width:1px;height:1px;background:#707070;"></div>
<svg style="position:absolute;left:59px;top:507px" width="16" height="16" viewBox="0 0 16 16"><rect x="0.5" y="0.5" width="6" height="6" fill="#fff" stroke="#505459"/><path d="M2 3.5 H5" stroke="#505459"/><rect x="9.5" y="2.5" width="6" height="2" fill="none" stroke="#505459"/><g fill="#505459"><rect x="3" y="8" width="1" height="1"/><rect x="3" y="10" width="1" height="1"/><rect x="3" y="12" width="1" height="1"/><rect x="3" y="14" width="1" height="1"/><rect x="5" y="11" width="1" height="1"/><rect x="7" y="11" width="1" height="1"/><rect x="5" y="14" width="1" height="1"/><rect x="7" y="14" width="1" height="1"/></g><rect x="9.5" y="10" width="6" height="2.2" fill="none" stroke="#c000e0"/><rect x="9.5" y="13.3" width="6" height="2.2" fill="none" stroke="#c000e0"/></svg>
<div class="t" style="left:80px;top:509.42px;font-size:12.5px;line-height:12.5px;color:#000;letter-spacing:0.17px;font-family:"Liberation Sans", sans-serif;">Dependencies</div>
<div style="left:50px;top:533px;width:1px;height:1px;background:#707070;"></div>
<div style="left:52px;top:533px;width:1px;height:1px;background:#707070;"></div>
<div style="left:54px;top:533px;width:1px;height:1px;background:#707070;"></div>
<div style="left:56px;top:533px;width:1px;height:1px;background:#707070;"></div>
<div style="left:58px;top:533px;width:1px;height:1px;background:#707070;"></div>
<svg style="position:absolute;left:59px;top:525px" width="16" height="16" viewBox="0 0 16 16"><path d="M8 1.5 H13 L15.5 4 V9.5 H8 Z" fill="#e8e8e8" stroke="#505459"/><path d="M13 1.5 V4 H15.5" fill="#fff" stroke="#505459"/><path d="M0.5 0.5 L9.5 9.5 H0.5 Z M3 5.5 L5.5 8 H3 Z" fill="#fff" fill-rule="evenodd" stroke="#505459"/><rect x="0.5" y="9.5" width="15" height="5" fill="#f5b312" stroke="#b87410"/><g fill="#9a5a00"><rect x="2" y="10" width="1" height="1.5"/><rect x="4" y="10" width="1" height="1.5"/><rect x="6" y="10" width="1" height="1.5"/><rect x="8" y="10" width="1" height="1.5"/><rect x="10" y="10" width="1" height="1.5"/><rect x="12" y="10" width="1" height="1.5"/></g></svg>
<div class="t" style="left:80px;top:527.42px;font-size:12.5px;line-height:12.5px;color:#000;letter-spacing:0.17px;font-family:"Liberation Sans", sans-serif;">Page Setups</div>
<div style="left:50px;top:551px;width:1px;height:1px;background:#707070;"></div>
<div style="left:52px;top:551px;width:1px;height:1px;background:#707070;"></div>
<div style="left:54px;top:551px;width:1px;height:1px;background:#707070;"></div>
<div style="left:56px;top:551px;width:1px;height:1px;background:#707070;"></div>
<div style="left:58px;top:551px;width:1px;height:1px;background:#707070;"></div>
<svg style="position:absolute;left:59px;top:543px" width="16" height="16" viewBox="0 0 16 16"><path d="M0.5 8.5 L3 5.5 H15.5 V11 L13 13.5 H0.5 Z" fill="#dcdfe3" stroke="#505459"/><path d="M5.5 7 V16 L13 9 V0.5 Z" fill="#d7ebfb" stroke="#2f73d6" stroke-width="1"/></svg>
<div class="t" style="left:80px;top:545.42px;font-size:12.5px;line-height:12.5px;color:#000;letter-spacing:0.17px;font-family:"Liberation Sans", sans-serif;">Section Planes</div>
<div style="left:50px;top:569px;width:1px;height:1px;background:#707070;"></div>
<div style="left:52px;top:569px;width:1px;height:1px;background:#707070;"></div>
<div style="left:54px;top:569px;width:1px;height:1px;background:#707070;"></div>
<div style="left:56px;top:569px;width:1px;height:1px;background:#707070;"></div>
<div style="left:58px;top:569px;width:1px;height:1px;background:#707070;"></div>
<svg style="position:absolute;left:59px;top:561px" width="16" height="16" viewBox="0 0 16 16"><circle cx="9.5" cy="6.5" r="5.8" fill="#fff" stroke="#2f73d6" stroke-width="1.2"/><path d="M5 4.5 H10.5 V10" fill="none" stroke="#505459"/><path d="M4.5 11.5 L1 15" stroke="#2f73d6" stroke-width="1.2"/><rect x="0" y="13" width="3" height="3" fill="#2f73d6"/><path d="M13 11.5 L16.5 8 M14.3 12.8 L16.5 10.6" stroke="#505459" stroke-width="1.1"/><path d="M8.5 15.8 C6.5 15.8 6.5 14 7.8 13.2 C9.2 12.3 11 12.5 12.2 11.2 L14.3 13.2 C13.6 15 11.5 15.9 8.5 15.8 Z" fill="#c8843c"/><path d="M8 15.2 C10 15 12 14.5 13.5 13" stroke="#a0622a" stroke-width="0.7" fill="none"/></svg>
<div class="t" style="left:80px;top:563.42px;font-size:12.5px;line-height:12.5px;color:#000;letter-spacing:0.17px;font-family:"Liberation Sans", sans-serif;">View Detail Styles</div>
<div style="left:50px;top:587px;width:1px;height:1px;background:#707070;"></div>
<div style="left:52px;top:587px;width:1px;height:1px;background:#707070;"></div>
<div style="left:54px;top:587px;width:1px;height:1px;background:#707070;"></div>
<div style="left:56px;top:587px;width:1px;height:1px;background:#707070;"></div>
<div style="left:58px;top:587px;width:1px;height:1px;background:#707070;"></div>
<svg style="position:absolute;left:59px;top:579px" width="16" height="16" viewBox="0 0 16 16"><path d="M0.5 0.5 H4 V5.5 H13.5 V11.5 H4 V15.5 H0.5 Z" fill="#fff" stroke="#505459" stroke-width="1.1"/><rect x="4" y="6.5" width="8" height="4" fill="#efefef"/><path d="M10 11.5 V1.5 H6.5 M8 0 L6 1.5 L8 3" stroke="#2f73d6" stroke-width="1.1" fill="none"/><path d="M13 11.5 L16.5 8 M14.3 12.8 L16.5 10.6" stroke="#505459" stroke-width="1.1"/><path d="M8.5 15.8 C6.5 15.8 6.5 14 7.8 13.2 C9.2 12.3 11 12.5 12.2 11.2 L14.3 13.2 C13.6 15 11.5 15.9 8.5 15.8 Z" fill="#c8843c"/><path d="M8 15.2 C10 15 12 14.5 13.5 13" stroke="#a0622a" stroke-width="0.7" fill="none"/></svg>
<div class="t" style="left:80px;top:581.42px;font-size:12.5px;line-height:12.5px;color:#000;letter-spacing:0.17px;font-family:"Liberation Sans", sans-serif;">View Section Styles</div>
<div style="left:18px;top:733px;width:262px;height:20px;background:#f0f0f0;"></div>
<div style="left:39px;top:733px;width:115px;height:19px;background:#cdcdcd;"></div>
<svg style="position:absolute;left:24px;top:738px" width="8" height="9" viewBox="0 0 8 9"><path d="M7.5 0 H5 L0 4.5 L5 9 H7.5 L2.5 4.5 Z" fill="#505050"/></svg>
<svg style="position:absolute;left:266px;top:738px" width="8" height="9" viewBox="0 0 8 9"><path d="M0 0 H2.5 L7.5 4.5 L2.5 9 H0 L5 4.5 Z" fill="#505050"/></svg>
<div style="left:303px;top:63px;width:461px;height:389px;background:#a0a0a0;"></div>
<div style="left:304px;top:64px;width:459px;height:387px;background:#fff;"></div>
<div style="left:304px;top:63px;width:459px;height:1px;background:#a0a0a0;"></div>
<div style="left:304px;top:64px;width:459px;height:26px;background:linear-gradient(#b9b9b9,#d5d5d5);"></div>
<div class="t" style="left:308px;top:71.42px;font-size:12.5px;line-height:12.5px;color:#000;letter-spacing:0.17px;font-family:"Liberation Sans", sans-serif;">Visual Styles [Drive_Assembly.dwg]</div>
<svg style="position:absolute;left:736px;top:74px" width="8" height="7" viewBox="0 0 8 7"><path d="M0.8 0.6 L7.2 6.4 M7.2 0.6 L0.8 6.4" stroke="#fff" stroke-width="2.1"/></svg>
<svg style="position:absolute;left:309px;top:93px" width="17" height="17" viewBox="0 0 17 17"><defs><linearGradient id="dg" x1="0" y1="0" x2="1" y2="1"><stop offset="0" stop-color="#dcdcdc"/><stop offset="1" stop-color="#fff"/></linearGradient></defs><path d="M0.5 0.5 H8.5 L12.5 4.5 V15.5 H0.5 Z" fill="url(#dg)" stroke="#505459"/><path d="M8.5 0.5 V4.5 H12.5" fill="#fff" stroke="#505459"/><rect x="8" y="10" width="7" height="7" fill="#fff"/><path d="M11.5 10.0 V17.0 M8.0 13.5 H15.0 M9.0 11.0 L14.0 16.0 M14.0 11.0 L9.0 16.0" stroke="#f26b1d" stroke-width="1.2"/><circle cx="11.5" cy="13.5" r="1.5" fill="#ffd34a"/></svg>
<svg style="position:absolute;left:332px;top:95px" width="12" height="12" viewBox="0 0 12 12"><path d="M1 1 L11 11 M11 1 L1 11" stroke="#d9262b" stroke-width="2"/></svg>
<svg style="position:absolute;left:353px;top:93px" width="17" height="17" viewBox="0 0 17 17"><path d="M0.5 0.5 H7 L10.5 4 V12.5 H0.5 Z" fill="#ececec" stroke="#505459"/><path d="M7 0.5 V4 H10.5" fill="#fff" stroke="#505459"/><rect x="12" y="3" width="2" height="6" fill="#505459"/><rect x="10.5" y="8.5" width="5" height="2" fill="#6a6e72"/><path d="M10 10.5 H16 L16.5 16.5 H9.5 Z" fill="#9a9da0"/><path d="M11.5 12 V16 M13 12 V16 M14.5 12 V16" stroke="#d0d0d0" stroke-width="0.6"/></svg>
<div style="left:375px;top:92px;width:1px;height:18px;background:#808080;"></div>
<svg style="position:absolute;left:384px;top:93px" width="17" height="17" viewBox="0 0 17 17"><defs><radialGradient id="sg" cx="0.35" cy="0.3" r="0.7"><stop offset="0" stop-color="#f0f0f0"/><stop offset="1" stop-color="#a8a8a8"/></radialGradient></defs><circle cx="7.8" cy="7.8" r="7.5" fill="url(#sg)"/><path d="M1.5 2.5 L5.5 8.5 M13 2 L10.5 6 M2 13 L4.5 11" stroke="#555" stroke-width="1"/><circle cx="11.5" cy="12" r="4.3" fill="#e8e8e8"/><path d="M8.3 10.5 A3.3 3.3 0 1 0 11.5 8.7" stroke="#555" stroke-width="1.5" fill="none"/><path d="M8.5 6.8 L12 8.7 L9 11 Z" fill="#555"/></svg>
<svg style="position:absolute;left:407px;top:93px" width="17" height="17" viewBox="0 0 17 17"><circle cx="7.8" cy="7.8" r="7.5" fill="url(#sg)"/><path d="M1.5 2.5 L5.5 8.5 M13 2 L10 7.5 M2 13 L4.5 11" stroke="#555" stroke-width="1"/><path d="M6.5 11.5 L9.5 14.5 L15.5 9" stroke="#fff" stroke-width="4" fill="none"/><path d="M6.5 11.5 L9.5 14.5 L15.5 9" stroke="#16b02e" stroke-width="2.4" fill="none"/></svg>
<div style="left:429px;top:92px;width:1px;height:18px;background:#808080;"></div>
<svg style="position:absolute;left:439px;top:93px" width="13" height="16" viewBox="0 0 13 16"><path d="M11.5 0 L4.5 11 M7 0 L9.5 11" stroke="#505459" stroke-width="2"/><path d="M11 1 L6 9.5" stroke="#cfcfcf" stroke-width="0.8"/><ellipse cx="3.3" cy="10" rx="2.4" ry="2.2" fill="none" stroke="#505459" stroke-width="1.8"/><ellipse cx="9.5" cy="13" rx="1.8" ry="2.3" fill="none" stroke="#505459" stroke-width="1.8"/></svg>
<svg style="position:absolute;left:461px;top:93px" width="17" height="17" viewBox="0 0 17 17"><path d="M0.5 0.5 H7 L9 2.5 V11.5 H0.5 Z" fill="#f3f3f3" stroke="#505459"/><path d="M6.5 4.5 H12.5 L15.5 7.5 V15.5 H6.5 Z" fill="#f0f0f0" stroke="#505459" stroke-width="1.1"/></svg>
<svg style="position:absolute;left:484px;top:93px" width="17" height="17" viewBox="0 0 17 17"><rect x="0.5" y="1.5" width="11" height="13" fill="#b8b8b8" stroke="#505459"/><rect x="3" y="0" width="6" height="2.5" rx="1" fill="#fff" stroke="#505459" stroke-width="1"/><path d="M8.5 6.5 H13 L15.5 9 V15.5 H8.5 Z" fill="#f0f0f0" stroke="#505459" stroke-width="1.1"/></svg>
<div style="left:506px;top:92px;width:1px;height:18px;background:#808080;"></div>
<svg style="position:absolute;left:515px;top:95px" width="17" height="17" viewBox="0 0 17 17"><path d="M8.5 13.5 H0.5 V0.5 H13.5 V6.5" fill="none" stroke="#505459"/><path d="M10.8 7.5 Q10.5 3 7 3 Q4.2 3 4.2 6.8" stroke="#16b02e" stroke-width="2" fill="none"/><path d="M1.8 6.5 L6.8 6.5 L4.2 10.2 Z" fill="#16b02e"/><path d="M12.5 6.5 V14.5 M8.5 10.5 H16.5" stroke="#f0561a" stroke-width="1.2"/><path d="M10 8 L15 13 M15 8 L10 13" stroke="#f5a07a" stroke-width="0.9"/><circle cx="12.5" cy="10.5" r="1.5" fill="#ffe01a"/></svg>
<svg style="position:absolute;left:539px;top:95px" width="14" height="13" viewBox="0 0 14 13"><path d="M7.5 1.5 A5 5 0 0 0 2.8 8.5" stroke="#16b02e" stroke-width="2.6" fill="none"/><path d="M0 7.5 L6 8 L1.5 12.8 Z" fill="#16b02e"/><path d="M6.5 11.5 A5 5 0 0 0 11.2 4.5" stroke="#16b02e" stroke-width="2.6" fill="none"/><path d="M14 5.5 L8 5 L12.5 0.2 Z" fill="#16b02e"/></svg>
<div style="left:560px;top:92px;width:1px;height:18px;background:#808080;"></div>
<div style="left:566px;top:90px;width:23px;height:21px;background:#cce4f7;border:1px solid #99d1ff;box-sizing:border-box;"></div>
<svg style="position:absolute;left:570px;top:93px" width="16" height="16" viewBox="0 0 16 16"><g fill="#505459"><rect x="0" y="1.5" width="2" height="1.3"/><rect x="3" y="1.5" width="6" height="1.3"/><rect x="10" y="1.5" width="2" height="1.3"/><rect x="13" y="1.5" width="2" height="1.3"/><rect x="0" y="5.5" width="2" height="1.3"/><rect x="3" y="5.5" width="6" height="1.3"/><rect x="10" y="5.5" width="2" height="1.3"/><rect x="13" y="5.5" width="2" height="1.3"/><rect x="0" y="9.5" width="2" height="1.3"/><rect x="3" y="9.5" width="6" height="1.3"/><rect x="10" y="9.5" width="2" height="1.3"/><rect x="13" y="9.5" width="2" height="1.3"/><rect x="0" y="13.5" width="2" height="1.3"/><rect x="3" y="13.5" width="6" height="1.3"/><rect x="10" y="13.5" width="2" height="1.3"/><rect x="13" y="13.5" width="2" height="1.3"/></g></svg>
<svg style="position:absolute;left:592px;top:93px" width="17" height="17" viewBox="0 0 17 17"><g fill="none" stroke="#505459" stroke-width="1"><rect x="0.5" y="0.5" width="3" height="3"/><rect x="6.5" y="0.5" width="3" height="3"/><rect x="12.5" y="0.5" width="3" height="3"/><rect x="0.5" y="9.5" width="3" height="3"/><rect x="6.5" y="9.5" width="3" height="3"/><rect x="12.5" y="9.5" width="3" height="3"/></g><g fill="#505459"><rect x="0" y="6" width="4" height="1"/><rect x="6" y="6" width="4" height="1"/><rect x="12" y="6" width="4" height="1"/><rect x="0" y="15" width="4" height="1"/><rect x="6" y="15" width="4" height="1"/><rect x="12" y="15" width="4" height="1"/></g></svg>
<svg style="position:absolute;left:615px;top:93px" width="17" height="17" viewBox="0 0 17 17"><rect x="0.5" y="0.5" width="6" height="6" fill="none" stroke="#505459"/><path d="M2 3.5 H5" stroke="#505459"/><rect x="9.5" y="2.5" width="6" height="2" fill="none" stroke="#505459"/><g fill="#505459"><rect x="3" y="8" width="1" height="1"/><rect x="3" y="10" width="1" height="1"/><rect x="3" y="12" width="1" height="1"/><rect x="3" y="14" width="1" height="1"/><rect x="5" y="10" width="1" height="1"/><rect x="7" y="10" width="1" height="1"/><rect x="5" y="14" width="1" height="1"/><rect x="7" y="14" width="1" height="1"/></g><rect x="9.5" y="9.5" width="6" height="2" fill="none" stroke="#505459"/><rect x="9.5" y="13.5" width="6" height="2" fill="none" stroke="#505459"/></svg>
<div style="left:637px;top:92px;width:1px;height:18px;background:#808080;"></div>
<div style="left:304px;top:117px;width:459px;height:334px;background:#e6e6e6;"></div>
<div style="left:345px;top:117px;width:418px;height:22px;background:#fff;"></div>
<div style="left:432px;top:117px;width:1px;height:275px;background:#e0e0e0;"></div>
<div style="left:607px;top:117px;width:1px;height:275px;background:#e0e0e0;"></div>
<div class="t" style="left:351px;top:123.42px;font-size:12.5px;line-height:12.5px;color:#000;letter-spacing:0.17px;font-family:"Liberation Sans", sans-serif;">Current</div>
<div class="t" style="left:439px;top:123.42px;font-size:12.5px;line-height:12.5px;color:#000;letter-spacing:0.17px;font-family:"Liberation Sans", sans-serif;">Name</div>
<div class="t" style="left:614px;top:123.42px;font-size:12.5px;line-height:12.5px;color:#000;letter-spacing:0.17px;font-family:"Liberation Sans", sans-serif;">Description</div>
<div style="left:304px;top:117px;width:41px;height:23px;background:#a0a0a0;"></div>
<div style="left:305px;top:118px;width:39px;height:21px;background:#ffffff;"></div>
<div style="left:306px;top:119px;width:38px;height:20px;background:#e6e6e6;"></div>
<div style="left:304px;top:139px;width:41px;height:22px;background:#a0a0a0;"></div>
<div style="left:305px;top:140px;width:39px;height:20px;background:#ffffff;"></div>
<div style="left:306px;top:141px;width:38px;height:19px;background:#e6e6e6;"></div>
<div style="left:345px;top:159px;width:418px;height:1px;background:#dedede;"></div>
<div class="t" style="left:435px;top:144.92px;font-size:12.5px;line-height:12.5px;color:#000;letter-spacing:0.17px;font-family:"Liberation Sans", sans-serif;">2dWireframe</div>
<div class="t" style="left:610px;top:144.92px;font-size:12.5px;line-height:12.5px;color:#000;letter-spacing:0.17px;font-family:"Liberation Sans", sans-serif;">2dWireframe</div>
<div class="t" style="left:305px;width:39px;text-align:center;top:143px;font-size:14px;line-height:16px;color:#4d4d4d;font-weight:bold;transform:scaleX(1.18);font-family:'Liberation Serif',serif">1</div>
<div style="left:304px;top:160px;width:41px;height:22px;background:#a0a0a0;"></div>
<div style="left:305px;top:161px;width:39px;height:20px;background:#ffffff;"></div>
<div style="left:306px;top:162px;width:38px;height:19px;background:#e6e6e6;"></div>
<div style="left:345px;top:180px;width:418px;height:1px;background:#dedede;"></div>
<div class="t" style="left:435px;top:165.92px;font-size:12.5px;line-height:12.5px;color:#000;letter-spacing:0.17px;font-family:"Liberation Sans", sans-serif;">Conceptual</div>
<div class="t" style="left:610px;top:165.92px;font-size:12.5px;line-height:12.5px;color:#000;letter-spacing:0.17px;font-family:"Liberation Sans", sans-serif;">Conceptual</div>
<div class="t" style="left:305px;width:39px;text-align:center;top:164px;font-size:14px;line-height:16px;color:#4d4d4d;font-weight:bold;transform:scaleX(1.18);font-family:'Liberation Serif',serif">2</div>
<div style="left:304px;top:181px;width:41px;height:22px;background:#a0a0a0;"></div>
<div style="left:305px;top:182px;width:39px;height:20px;background:#ffffff;"></div>
<div style="left:306px;top:183px;width:38px;height:19px;background:#e6e6e6;"></div>
<div style="left:345px;top:201px;width:418px;height:1px;background:#dedede;"></div>
<div class="t" style="left:435px;top:186.92px;font-size:12.5px;line-height:12.5px;color:#000;letter-spacing:0.17px;font-family:"Liberation Sans", sans-serif;">Hidden</div>
<div class="t" style="left:610px;top:186.92px;font-size:12.5px;line-height:12.5px;color:#000;letter-spacing:0.17px;font-family:"Liberation Sans", sans-serif;">Hidden</div>
<div class="t" style="left:305px;width:39px;text-align:center;top:185px;font-size:14px;line-height:16px;color:#4d4d4d;font-weight:bold;transform:scaleX(1.18);font-family:'Liberation Serif',serif">3</div>
<div style="left:304px;top:202px;width:41px;height:22px;background:#a0a0a0;"></div>
<div style="left:305px;top:203px;width:39px;height:20px;background:#ffffff;"></div>
<div style="left:306px;top:204px;width:38px;height:19px;background:#e6e6e6;"></div>
<div style="left:345px;top:222px;width:418px;height:1px;background:#dedede;"></div>
<div style="left:345px;top:203px;width:87px;height:20px;background:#a0a0a0;"></div>
<div style="left:433px;top:203px;width:174px;height:20px;background:#a0a0a0;"></div>
<div style="left:608px;top:203px;width:155px;height:20px;background:#a0a0a0;"></div>
<svg style="position:absolute;left:383px;top:208px" width="11" height="11" viewBox="0 0 11 11"><defs><radialGradient id="rg" cx="0.5" cy="0.3" r="0.6"><stop offset="0" stop-color="#ffffff"/><stop offset="1" stop-color="#8fb8f0"/></radialGradient></defs><circle cx="5.5" cy="5.5" r="4.6" fill="url(#rg)" stroke="#4f86d6" stroke-width="1.2"/></svg>
<div class="t" style="left:435px;top:207.92px;font-size:12.5px;line-height:12.5px;color:#000;letter-spacing:0.17px;font-family:"Liberation Sans", sans-serif;">Mechanical</div>
<div class="t" style="left:610px;top:207.92px;font-size:12.5px;line-height:12.5px;color:#000;letter-spacing:0.17px;font-family:"Liberation Sans", sans-serif;">Mechanical</div>
<div class="t" style="left:305px;width:39px;text-align:center;top:206px;font-size:14px;line-height:16px;color:#4d4d4d;font-weight:bold;transform:scaleX(1.18);font-family:'Liberation Serif',serif">4</div>
<div style="left:304px;top:223px;width:41px;height:22px;background:#a0a0a0;"></div>
<div style="left:305px;top:224px;width:39px;height:20px;background:#ffffff;"></div>
<div style="left:306px;top:225px;width:38px;height:19px;background:#e6e6e6;"></div>
<div style="left:345px;top:243px;width:418px;height:1px;background:#dedede;"></div>
<div class="t" style="left:435px;top:228.92px;font-size:12.5px;line-height:12.5px;color:#000;letter-spacing:0.17px;font-family:"Liberation Sans", sans-serif;">Modeling</div>
<div class="t" style="left:610px;top:228.92px;font-size:12.5px;line-height:12.5px;color:#000;letter-spacing:0.17px;font-family:"Liberation Sans", sans-serif;">Modeling</div>
<div class="t" style="left:305px;width:39px;text-align:center;top:227px;font-size:14px;line-height:16px;color:#4d4d4d;font-weight:bold;transform:scaleX(1.18);font-family:'Liberation Serif',serif">5</div>
<div style="left:304px;top:244px;width:41px;height:22px;background:#a0a0a0;"></div>
<div style="left:305px;top:245px;width:39px;height:20px;background:#ffffff;"></div>
<div style="left:306px;top:246px;width:38px;height:19px;background:#e6e6e6;"></div>
<div style="left:345px;top:264px;width:418px;height:1px;background:#dedede;"></div>
<div class="t" style="left:435px;top:249.92px;font-size:12.5px;line-height:12.5px;color:#000;letter-spacing:0.17px;font-family:"Liberation Sans", sans-serif;">Realistic</div>
<div class="t" style="left:610px;top:249.92px;font-size:12.5px;line-height:12.5px;color:#000;letter-spacing:0.17px;font-family:"Liberation Sans", sans-serif;">Realistic</div>
<div class="t" style="left:305px;width:39px;text-align:center;top:248px;font-size:14px;line-height:16px;color:#4d4d4d;font-weight:bold;transform:scaleX(1.18);font-family:'Liberation Serif',serif">6</div>
<div style="left:304px;top:265px;width:41px;height:22px;background:#a0a0a0;"></div>
<div style="left:305px;top:266px;width:39px;height:20px;background:#ffffff;"></div>
<div style="left:306px;top:267px;width:38px;height:19px;background:#e6e6e6;"></div>
<div style="left:345px;top:285px;width:418px;height:1px;background:#dedede;"></div>
<div class="t" style="left:435px;top:270.92px;font-size:12.5px;line-height:12.5px;color:#000;letter-spacing:0.17px;font-family:"Liberation Sans", sans-serif;">Shaded</div>
<div class="t" style="left:610px;top:270.92px;font-size:12.5px;line-height:12.5px;color:#000;letter-spacing:0.17px;font-family:"Liberation Sans", sans-serif;">Shaded</div>
<div class="t" style="left:305px;width:39px;text-align:center;top:269px;font-size:14px;line-height:16px;color:#4d4d4d;font-weight:bold;transform:scaleX(1.18);font-family:'Liberation Serif',serif">7</div>
<div style="left:304px;top:286px;width:41px;height:22px;background:#a0a0a0;"></div>
<div style="left:305px;top:287px;width:39px;height:20px;background:#ffffff;"></div>
<div style="left:306px;top:288px;width:38px;height:19px;background:#e6e6e6;"></div>
<div style="left:345px;top:306px;width:418px;height:1px;background:#dedede;"></div>
<div class="t" style="left:435px;top:291.92px;font-size:12.5px;line-height:12.5px;color:#000;letter-spacing:0.17px;font-family:"Liberation Sans", sans-serif;">Shaded with edges</div>
<div class="t" style="left:610px;top:291.92px;font-size:12.5px;line-height:12.5px;color:#000;letter-spacing:0.17px;font-family:"Liberation Sans", sans-serif;">Shaded with edges</div>
<div class="t" style="left:305px;width:39px;text-align:center;top:290px;font-size:14px;line-height:16px;color:#4d4d4d;font-weight:bold;transform:scaleX(1.18);font-family:'Liberation Serif',serif">8</div>
<div style="left:304px;top:307px;width:41px;height:22px;background:#a0a0a0;"></div>
<div style="left:305px;top:308px;width:39px;height:20px;background:#ffffff;"></div>
<div style="left:306px;top:309px;width:38px;height:19px;background:#e6e6e6;"></div>
<div style="left:345px;top:327px;width:418px;height:1px;background:#dedede;"></div>
<div class="t" style="left:435px;top:312.92px;font-size:12.5px;line-height:12.5px;color:#000;letter-spacing:0.17px;font-family:"Liberation Sans", sans-serif;">Shades of Gray</div>
<div class="t" style="left:610px;top:312.92px;font-size:12.5px;line-height:12.5px;color:#000;letter-spacing:0.17px;font-family:"Liberation Sans", sans-serif;">Shades of Gray</div>
<div class="t" style="left:305px;width:39px;text-align:center;top:311px;font-size:14px;line-height:16px;color:#4d4d4d;font-weight:bold;transform:scaleX(1.18);font-family:'Liberation Serif',serif">9</div>
<div style="left:304px;top:328px;width:41px;height:22px;background:#a0a0a0;"></div>
<div style="left:305px;top:329px;width:39px;height:20px;background:#ffffff;"></div>
<div style="left:306px;top:330px;width:38px;height:19px;background:#e6e6e6;"></div>
<div style="left:345px;top:348px;width:418px;height:1px;background:#dedede;"></div>
<div class="t" style="left:435px;top:333.92px;font-size:12.5px;line-height:12.5px;color:#000;letter-spacing:0.17px;font-family:"Liberation Sans", sans-serif;">Sketchy</div>
<div class="t" style="left:610px;top:333.92px;font-size:12.5px;line-height:12.5px;color:#000;letter-spacing:0.17px;font-family:"Liberation Sans", sans-serif;">Sketchy</div>
<div class="t" style="left:305px;width:39px;text-align:center;top:332px;font-size:14px;line-height:16px;color:#4d4d4d;font-weight:bold;transform:scaleX(1.18);font-family:'Liberation Serif',serif">10</div>
<div style="left:304px;top:349px;width:41px;height:22px;background:#a0a0a0;"></div>
<div style="left:305px;top:350px;width:39px;height:20px;background:#ffffff;"></div>
<div style="left:306px;top:351px;width:38px;height:19px;background:#e6e6e6;"></div>
<div style="left:345px;top:369px;width:418px;height:1px;background:#dedede;"></div>
<div class="t" style="left:435px;top:354.92px;font-size:12.5px;line-height:12.5px;color:#000;letter-spacing:0.17px;font-family:"Liberation Sans", sans-serif;">Wireframe</div>
<div class="t" style="left:610px;top:354.92px;font-size:12.5px;line-height:12.5px;color:#000;letter-spacing:0.17px;font-family:"Liberation Sans", sans-serif;">Wireframe</div>
<div class="t" style="left:305px;width:39px;text-align:center;top:353px;font-size:14px;line-height:16px;color:#4d4d4d;font-weight:bold;transform:scaleX(1.18);font-family:'Liberation Serif',serif">11</div>
<div style="left:304px;top:370px;width:41px;height:22px;background:#a0a0a0;"></div>
<div style="left:305px;top:371px;width:39px;height:20px;background:#ffffff;"></div>
<div style="left:306px;top:372px;width:38px;height:19px;background:#e6e6e6;"></div>
<div style="left:345px;top:390px;width:418px;height:1px;background:#dedede;"></div>
<div class="t" style="left:435px;top:375.92px;font-size:12.5px;line-height:12.5px;color:#000;letter-spacing:0.17px;font-family:"Liberation Sans", sans-serif;">X-Ray</div>
<div class="t" style="left:610px;top:375.92px;font-size:12.5px;line-height:12.5px;color:#000;letter-spacing:0.17px;font-family:"Liberation Sans", sans-serif;">X-Ray</div>
<div class="t" style="left:305px;width:39px;text-align:center;top:374px;font-size:14px;line-height:16px;color:#4d4d4d;font-weight:bold;transform:scaleX(1.18);font-family:'Liberation Serif',serif">12</div>
<div style="left:304px;top:431px;width:459px;height:1px;background:#fff;"></div>
<div style="left:304px;top:432px;width:459px;height:19px;background:#f0f0f0;"></div>
<div style="left:325px;top:432px;width:322px;height:19px;background:#cdcdcd;"></div>
<svg style="position:absolute;left:310px;top:437px" width="8" height="9" viewBox="0 0 8 9"><path d="M7.5 0 H5 L0 4.5 L5 9 H7.5 L2.5 4.5 Z" fill="#505050"/></svg>
<svg style="position:absolute;left:749px;top:437px" width="8" height="9" viewBox="0 0 8 9"><path d="M0 0 H2.5 L7.5 4.5 L2.5 9 H0 L5 4.5 Z" fill="#505050"/></svg>
<div style="left:303px;top:458px;width:461px;height:312px;background:#a0a0a0;"></div>
<div style="left:304px;top:459px;width:459px;height:310px;background:#fff;"></div>
<div style="left:304px;top:458px;width:459px;height:1px;background:#a0a0a0;"></div>
<div style="left:304px;top:459px;width:459px;height:26px;background:linear-gradient(#b9b9b9,#d5d5d5);"></div>
<div class="t" style="left:308px;top:466.42px;font-size:12.5px;line-height:12.5px;color:#000;letter-spacing:0.17px;font-family:"Liberation Sans", sans-serif;">Preview</div>
<svg style="position:absolute;left:736px;top:469px" width="8" height="7" viewBox="0 0 8 7"><path d="M0.8 0.6 L7.2 6.4 M7.2 0.6 L0.8 6.4" stroke="#fff" stroke-width="2.1"/></svg>
<div style="left:770px;top:63px;width:398px;height:707px;background:#a0a0a0;"></div>
<div style="left:771px;top:64px;width:396px;height:704px;background:#fff;"></div>
<div style="left:771px;top:63px;width:396px;height:1px;background:#a0a0a0;"></div>
<div style="left:771px;top:64px;width:396px;height:26px;background:linear-gradient(#b9b9b9,#d5d5d5);"></div>
<div class="t" style="left:775px;top:71.42px;font-size:12.5px;line-height:12.5px;color:#000;letter-spacing:0.17px;font-family:"Liberation Sans", sans-serif;">Edit Visual Style: Mechanical</div>
<svg style="position:absolute;left:1140px;top:74px" width="8" height="7" viewBox="0 0 8 7"><path d="M0.8 0.6 L7.2 6.4 M7.2 0.6 L0.8 6.4" stroke="#fff" stroke-width="2.1"/></svg>
<div style="left:770px;top:90px;width:2px;height:679px;background:#a0a0a0;"></div>
<div style="left:770px;top:768px;width:397px;height:2px;background:#a0a0a0;"></div>
<div style="left:1166px;top:90px;width:2px;height:680px;background:#a0a0a0;"></div>
<div style="left:771px;top:90px;width:396px;height:1px;background:#a0a0a5;"></div>
<div style="left:776px;top:97px;width:11px;height:11px;background:linear-gradient(#fdfdfd,#e0e0e0);border:1px solid #8f8f8f;border-radius:1.5px;box-sizing:border-box;"></div>
<div style="left:778px;top:102px;width:7px;height:1.3px;background:#3b4da0;"></div>
<div class="t" style="left:793.5px;top:96.92px;font-size:12.5px;line-height:12.5px;color:#000;font-weight:bold;letter-spacing:0.5px;font-family:"Liberation Sans", sans-serif;">Face Settings</div>
<div style="left:790px;top:112px;width:1px;height:22px;background:#ebebeb;"></div>
<div style="left:790px;top:112px;width:376px;height:1px;background:#ebebeb;"></div>
<div style="left:790px;top:133px;width:376px;height:1px;background:#ebebeb;"></div>
<div style="left:973px;top:112px;width:1px;height:22px;background:#ebebeb;"></div>
<div class="t" style="left:795px;top:117.92px;font-size:12.5px;line-height:12.5px;color:#000;letter-spacing:0.17px;font-family:"Liberation Sans", sans-serif;">Face style</div>
<div class="t" style="left:978px;top:117.92px;font-size:12.5px;line-height:12.5px;color:#000;letter-spacing:0.17px;font-family:"Liberation Sans", sans-serif;">Realistic</div>
<div style="left:790px;top:133px;width:1px;height:22px;background:#ebebeb;"></div>
<div style="left:790px;top:133px;width:376px;height:1px;background:#ebebeb;"></div>
<div style="left:790px;top:154px;width:376px;height:1px;background:#ebebeb;"></div>
<div style="left:973px;top:133px;width:1px;height:22px;background:#ebebeb;"></div>
<div class="t" style="left:795px;top:138.92px;font-size:12.5px;line-height:12.5px;color:#000;letter-spacing:0.17px;font-family:"Liberation Sans", sans-serif;">Lighting quality</div>
<div class="t" style="left:978px;top:138.92px;font-size:12.5px;line-height:12.5px;color:#000;letter-spacing:0.17px;font-family:"Liberation Sans", sans-serif;">Smooth</div>
<div style="left:790px;top:154px;width:1px;height:22px;background:#ebebeb;"></div>
<div style="left:790px;top:154px;width:376px;height:1px;background:#ebebeb;"></div>
<div style="left:790px;top:175px;width:376px;height:1px;background:#ebebeb;"></div>
<div style="left:973px;top:154px;width:1px;height:22px;background:#ebebeb;"></div>
<div class="t" style="left:795px;top:159.92px;font-size:12.5px;line-height:12.5px;color:#000;letter-spacing:0.17px;font-family:"Liberation Sans", sans-serif;">Color</div>
<div class="t" style="left:978px;top:159.92px;font-size:12.5px;line-height:12.5px;color:#000;letter-spacing:0.17px;font-family:"Liberation Sans", sans-serif;">Normal</div>
<div style="left:790px;top:175px;width:1px;height:22px;background:#ebebeb;"></div>
<div style="left:790px;top:175px;width:376px;height:1px;background:#ebebeb;"></div>
<div style="left:790px;top:196px;width:376px;height:1px;background:#ebebeb;"></div>
<div style="left:973px;top:175px;width:1px;height:22px;background:#ebebeb;"></div>
<div class="t" style="left:795px;top:180.92px;font-size:12.5px;line-height:12.5px;color:#000;letter-spacing:0.17px;font-family:"Liberation Sans", sans-serif;">Material display</div>
<div class="t" style="left:978px;top:180.92px;font-size:12.5px;line-height:12.5px;color:#000;letter-spacing:0.17px;font-family:"Liberation Sans", sans-serif;">Materials and textures</div>
<div style="left:795px;top:202px;width:11px;height:11px;background:linear-gradient(#fdfdfd,#e0e0e0);border:1px solid #8f8f8f;border-radius:1.5px;box-sizing:border-box;"></div>
<div style="left:797px;top:207px;width:7px;height:1.3px;background:#3b4da0;"></div>
<div class="t" style="left:812.5px;top:201.92px;font-size:12.5px;line-height:12.5px;color:#000;font-weight:bold;letter-spacing:0.5px;font-family:"Liberation Sans", sans-serif;">Opacity</div>
<div style="left:809px;top:217px;width:1px;height:22px;background:#ebebeb;"></div>
<div style="left:809px;top:217px;width:357px;height:1px;background:#ebebeb;"></div>
<div style="left:809px;top:238px;width:357px;height:1px;background:#ebebeb;"></div>
<div style="left:973px;top:217px;width:1px;height:22px;background:#ebebeb;"></div>
<div class="t" style="left:814px;top:222.92px;font-size:12.5px;line-height:12.5px;color:#000;letter-spacing:0.17px;font-family:"Liberation Sans", sans-serif;">On/Off</div>
<div class="t" style="left:978px;top:222.92px;font-size:12.5px;line-height:12.5px;color:#000;letter-spacing:0.17px;font-family:"Liberation Sans", sans-serif;">Off</div>
<div style="left:809px;top:238px;width:1px;height:22px;background:#ebebeb;"></div>
<div style="left:809px;top:238px;width:357px;height:1px;background:#ebebeb;"></div>
<div style="left:809px;top:259px;width:357px;height:1px;background:#ebebeb;"></div>
<div style="left:973px;top:238px;width:1px;height:22px;background:#ebebeb;"></div>
<div class="t" style="left:814px;top:243.92px;font-size:12.5px;line-height:12.5px;color:#000;letter-spacing:0.17px;font-family:"Liberation Sans", sans-serif;">Opacity</div>
<div class="t" style="left:978px;top:243.92px;font-size:12.5px;line-height:12.5px;color:#808080;letter-spacing:0.17px;font-family:"Liberation Sans", sans-serif;">60</div>
<div style="left:809px;top:259px;width:1px;height:22px;background:#ebebeb;"></div>
<div style="left:809px;top:259px;width:357px;height:1px;background:#ebebeb;"></div>
<div style="left:809px;top:280px;width:357px;height:1px;background:#ebebeb;"></div>
<div style="left:973px;top:259px;width:1px;height:22px;background:#ebebeb;"></div>
<div class="t" style="left:814px;top:264.92px;font-size:12.5px;line-height:12.5px;color:#000;letter-spacing:0.17px;font-family:"Liberation Sans", sans-serif;">Transparency depth</div>
<div class="t" style="left:978px;top:264.92px;font-size:12.5px;line-height:12.5px;color:#000;letter-spacing:0.17px;font-family:"Liberation Sans", sans-serif;">4</div>
<div style="left:776px;top:286px;width:11px;height:11px;background:linear-gradient(#fdfdfd,#e0e0e0);border:1px solid #8f8f8f;border-radius:1.5px;box-sizing:border-box;"></div>
<div style="left:778px;top:291px;width:7px;height:1.3px;background:#3b4da0;"></div>
<div class="t" style="left:793.5px;top:285.92px;font-size:12.5px;line-height:12.5px;color:#000;font-weight:bold;letter-spacing:0.5px;font-family:"Liberation Sans", sans-serif;">Lighting</div>
<div style="left:790px;top:301px;width:1px;height:22px;background:#ebebeb;"></div>
<div style="left:790px;top:301px;width:376px;height:1px;background:#ebebeb;"></div>
<div style="left:790px;top:322px;width:376px;height:1px;background:#ebebeb;"></div>
<div style="left:973px;top:301px;width:1px;height:22px;background:#ebebeb;"></div>
<div class="t" style="left:795px;top:306.92px;font-size:12.5px;line-height:12.5px;color:#000;letter-spacing:0.17px;font-family:"Liberation Sans", sans-serif;">Shadow display</div>
<div class="t" style="left:978px;top:306.92px;font-size:12.5px;line-height:12.5px;color:#000;letter-spacing:0.17px;font-family:"Liberation Sans", sans-serif;">Off</div>
<div style="left:776px;top:328px;width:11px;height:11px;background:linear-gradient(#fdfdfd,#e0e0e0);border:1px solid #8f8f8f;border-radius:1.5px;box-sizing:border-box;"></div>
<div style="left:778px;top:333px;width:7px;height:1.3px;background:#3b4da0;"></div>
<div class="t" style="left:793.5px;top:327.92px;font-size:12.5px;line-height:12.5px;color:#000;font-weight:bold;letter-spacing:0.5px;font-family:"Liberation Sans", sans-serif;">Edge Settings</div>
<div style="left:790px;top:343px;width:1px;height:22px;background:#ebebeb;"></div>
<div style="left:790px;top:343px;width:376px;height:1px;background:#ebebeb;"></div>
<div style="left:790px;top:364px;width:376px;height:1px;background:#ebebeb;"></div>
<div style="left:973px;top:343px;width:1px;height:22px;background:#ebebeb;"></div>
<div class="t" style="left:795px;top:348.92px;font-size:12.5px;line-height:12.5px;color:#000;letter-spacing:0.17px;font-family:"Liberation Sans", sans-serif;">Show</div>
<div class="t" style="left:978px;top:348.92px;font-size:12.5px;line-height:12.5px;color:#000;letter-spacing:0.17px;font-family:"Liberation Sans", sans-serif;">Facet Edges</div>
<div style="left:790px;top:364px;width:1px;height:22px;background:#ebebeb;"></div>
<div style="left:790px;top:364px;width:376px;height:1px;background:#ebebeb;"></div>
<div style="left:790px;top:385px;width:376px;height:1px;background:#ebebeb;"></div>
<div style="left:973px;top:364px;width:1px;height:22px;background:#ebebeb;"></div>
<div class="t" style="left:795px;top:369.92px;font-size:12.5px;line-height:12.5px;color:#000;letter-spacing:0.17px;font-family:"Liberation Sans", sans-serif;">Color</div>
<div style="left:980px;top:367px;width:16px;height:16px;background:#000;"></div>
<div class="t" style="left:1002px;top:368.92px;font-size:12.5px;line-height:12.5px;color:#000;letter-spacing:0.17px;font-family:"Liberation Sans", sans-serif;">RGB:0,0,0</div>
<div style="left:790px;top:385px;width:1px;height:22px;background:#ebebeb;"></div>
<div style="left:790px;top:385px;width:376px;height:1px;background:#ebebeb;"></div>
<div style="left:790px;top:406px;width:376px;height:1px;background:#ebebeb;"></div>
<div style="left:973px;top:385px;width:1px;height:22px;background:#ebebeb;"></div>
<div class="t" style="left:795px;top:390.92px;font-size:12.5px;line-height:12.5px;color:#000;letter-spacing:0.17px;font-family:"Liberation Sans", sans-serif;">Width</div>
<div class="t" style="left:978px;top:390.92px;font-size:12.5px;line-height:12.5px;color:#000;letter-spacing:0.17px;font-family:"Liberation Sans", sans-serif;">1</div>
<div style="left:790px;top:406px;width:1px;height:22px;background:#ebebeb;"></div>
<div style="left:790px;top:406px;width:376px;height:1px;background:#ebebeb;"></div>
<div style="left:790px;top:427px;width:376px;height:1px;background:#ebebeb;"></div>
<div style="left:973px;top:406px;width:1px;height:22px;background:#ebebeb;"></div>
<div class="t" style="left:795px;top:411.92px;font-size:12.5px;line-height:12.5px;color:#000;letter-spacing:0.17px;font-family:"Liberation Sans", sans-serif;">Crease angle</div>
<div class="t" style="left:978px;top:411.92px;font-size:12.5px;line-height:12.5px;color:#000;letter-spacing:0.17px;font-family:"Liberation Sans", sans-serif;">180</div>
<div style="left:795px;top:433px;width:11px;height:11px;background:linear-gradient(#fdfdfd,#e0e0e0);border:1px solid #8f8f8f;border-radius:1.5px;box-sizing:border-box;"></div>
<div style="left:797px;top:438px;width:7px;height:1.3px;background:#3b4da0;"></div>
<div class="t" style="left:812.5px;top:432.92px;font-size:12.5px;line-height:12.5px;color:#000;font-weight:bold;letter-spacing:0.5px;font-family:"Liberation Sans", sans-serif;">Silhouette Edges</div>
<div style="left:809px;top:448px;width:1px;height:22px;background:#ebebeb;"></div>
<div style="left:809px;top:448px;width:357px;height:1px;background:#ebebeb;"></div>
<div style="left:809px;top:469px;width:357px;height:1px;background:#ebebeb;"></div>
<div style="left:973px;top:448px;width:1px;height:22px;background:#ebebeb;"></div>
<div class="t" style="left:814px;top:453.92px;font-size:12.5px;line-height:12.5px;color:#000;letter-spacing:0.17px;font-family:"Liberation Sans", sans-serif;">Show</div>
<div class="t" style="left:978px;top:453.92px;font-size:12.5px;line-height:12.5px;color:#000;letter-spacing:0.17px;font-family:"Liberation Sans", sans-serif;">Yes</div>
<div style="left:809px;top:469px;width:1px;height:22px;background:#ebebeb;"></div>
<div style="left:809px;top:469px;width:357px;height:1px;background:#ebebeb;"></div>
<div style="left:809px;top:490px;width:357px;height:1px;background:#ebebeb;"></div>
<div style="left:973px;top:469px;width:1px;height:22px;background:#ebebeb;"></div>
<div class="t" style="left:814px;top:474.92px;font-size:12.5px;line-height:12.5px;color:#000;letter-spacing:0.17px;font-family:"Liberation Sans", sans-serif;">Width</div>
<div class="t" style="left:978px;top:474.92px;font-size:12.5px;line-height:12.5px;color:#000;letter-spacing:0.17px;font-family:"Liberation Sans", sans-serif;">1</div>
<div style="left:795px;top:496px;width:11px;height:11px;background:linear-gradient(#fdfdfd,#e0e0e0);border:1px solid #8f8f8f;border-radius:1.5px;box-sizing:border-box;"></div>
<div style="left:797px;top:501px;width:7px;height:1.3px;background:#3b4da0;"></div>
<div class="t" style="left:812.5px;top:495.92px;font-size:12.5px;line-height:12.5px;color:#000;font-weight:bold;letter-spacing:0.5px;font-family:"Liberation Sans", sans-serif;">Occluded Edges</div>
<div style="left:809px;top:511px;width:1px;height:22px;background:#ebebeb;"></div>
<div style="left:809px;top:511px;width:357px;height:1px;background:#ebebeb;"></div>
<div style="left:809px;top:532px;width:357px;height:1px;background:#ebebeb;"></div>
<div style="left:973px;top:511px;width:1px;height:22px;background:#ebebeb;"></div>
<div class="t" style="left:814px;top:516.92px;font-size:12.5px;line-height:12.5px;color:#000;letter-spacing:0.17px;font-family:"Liberation Sans", sans-serif;">Show</div>
<div class="t" style="left:978px;top:516.92px;font-size:12.5px;line-height:12.5px;color:#000;letter-spacing:0.17px;font-family:"Liberation Sans", sans-serif;">No</div>
<div style="left:809px;top:532px;width:1px;height:22px;background:#ebebeb;"></div>
<div style="left:809px;top:532px;width:357px;height:1px;background:#ebebeb;"></div>
<div style="left:809px;top:553px;width:357px;height:1px;background:#ebebeb;"></div>
<div style="left:973px;top:532px;width:1px;height:22px;background:#ebebeb;"></div>
<div class="t" style="left:814px;top:537.92px;font-size:12.5px;line-height:12.5px;color:#000;letter-spacing:0.17px;font-family:"Liberation Sans", sans-serif;">Color</div>
<svg style="position:absolute;left:980px;top:535px" width="16" height="16" viewBox="0 0 16 16"><rect x="0.75" y="0.75" width="14.5" height="14.5" fill="#fff" stroke="#000" stroke-width="1.5"/><path d="M1.5 14.5 L14.5 1.5" stroke="#000" stroke-width="1.1"/></svg>
<div class="t" style="left:1002px;top:536.92px;font-size:12.5px;line-height:12.5px;color:#000;letter-spacing:0.17px;font-family:"Liberation Sans", sans-serif;">ByEntity</div>
<div style="left:809px;top:553px;width:1px;height:22px;background:#ebebeb;"></div>
<div style="left:809px;top:553px;width:357px;height:1px;background:#ebebeb;"></div>
<div style="left:809px;top:574px;width:357px;height:1px;background:#ebebeb;"></div>
<div style="left:973px;top:553px;width:1px;height:22px;background:#ebebeb;"></div>
<div class="t" style="left:814px;top:558.92px;font-size:12.5px;line-height:12.5px;color:#000;letter-spacing:0.17px;font-family:"Liberation Sans", sans-serif;">Linetype</div>
<div class="t" style="left:978px;top:558.92px;font-size:12.5px;line-height:12.5px;color:#000;letter-spacing:0.17px;font-family:"Liberation Sans", sans-serif;">Solid</div>
<div style="left:795px;top:580px;width:11px;height:11px;background:linear-gradient(#fdfdfd,#e0e0e0);border:1px solid #8f8f8f;border-radius:1.5px;box-sizing:border-box;"></div>
<div style="left:797px;top:585px;width:7px;height:1.3px;background:#3b4da0;"></div>
<div class="t" style="left:812.5px;top:579.92px;font-size:12.5px;line-height:12.5px;color:#000;font-weight:bold;letter-spacing:0.5px;font-family:"Liberation Sans", sans-serif;">Line Extensions</div>
<div style="left:809px;top:595px;width:1px;height:22px;background:#ebebeb;"></div>
<div style="left:809px;top:595px;width:357px;height:1px;background:#ebebeb;"></div>
<div style="left:809px;top:616px;width:357px;height:1px;background:#ebebeb;"></div>
<div style="left:973px;top:595px;width:1px;height:22px;background:#ebebeb;"></div>
<div class="t" style="left:814px;top:600.92px;font-size:12.5px;line-height:12.5px;color:#000;letter-spacing:0.17px;font-family:"Liberation Sans", sans-serif;">On/Off</div>
<div class="t" style="left:978px;top:600.92px;font-size:12.5px;line-height:12.5px;color:#000;letter-spacing:0.17px;font-family:"Liberation Sans", sans-serif;">Off</div>
<div style="left:809px;top:616px;width:1px;height:22px;background:#ebebeb;"></div>
<div style="left:809px;top:616px;width:357px;height:1px;background:#ebebeb;"></div>
<div style="left:809px;top:637px;width:357px;height:1px;background:#ebebeb;"></div>
<div style="left:973px;top:616px;width:1px;height:22px;background:#ebebeb;"></div>
<div class="t" style="left:814px;top:621.92px;font-size:12.5px;line-height:12.5px;color:#000;letter-spacing:0.17px;font-family:"Liberation Sans", sans-serif;">Line extensions</div>
<div class="t" style="left:978px;top:621.92px;font-size:12.5px;line-height:12.5px;color:#808080;letter-spacing:0.17px;font-family:"Liberation Sans", sans-serif;">6</div>
<div style="left:795px;top:643px;width:11px;height:11px;background:linear-gradient(#fdfdfd,#e0e0e0);border:1px solid #8f8f8f;border-radius:1.5px;box-sizing:border-box;"></div>
<div style="left:797px;top:648px;width:7px;height:1.3px;background:#3b4da0;"></div>
<div class="t" style="left:812.5px;top:642.92px;font-size:12.5px;line-height:12.5px;color:#000;font-weight:bold;letter-spacing:0.5px;font-family:"Liberation Sans", sans-serif;">Custom Pen</div>
<div style="left:809px;top:658px;width:1px;height:22px;background:#ebebeb;"></div>
<div style="left:809px;top:658px;width:357px;height:1px;background:#ebebeb;"></div>
<div style="left:809px;top:679px;width:357px;height:1px;background:#ebebeb;"></div>
<div style="left:973px;top:658px;width:1px;height:22px;background:#ebebeb;"></div>
<div class="t" style="left:814px;top:663.92px;font-size:12.5px;line-height:12.5px;color:#000;letter-spacing:0.17px;font-family:"Liberation Sans", sans-serif;">On/Off</div>
<div class="t" style="left:978px;top:663.92px;font-size:12.5px;line-height:12.5px;color:#000;letter-spacing:0.17px;font-family:"Liberation Sans", sans-serif;">Off</div>
<div style="left:809px;top:679px;width:1px;height:22px;background:#ebebeb;"></div>
<div style="left:809px;top:679px;width:357px;height:1px;background:#ebebeb;"></div>
<div style="left:809px;top:700px;width:357px;height:1px;background:#ebebeb;"></div>
<div style="left:973px;top:679px;width:1px;height:22px;background:#ebebeb;"></div>
<div class="t" style="left:814px;top:684.92px;font-size:12.5px;line-height:12.5px;color:#000;letter-spacing:0.17px;font-family:"Liberation Sans", sans-serif;">Custom pen</div>
<div style="left:776px;top:706px;width:11px;height:11px;background:linear-gradient(#fdfdfd,#e0e0e0);border:1px solid #8f8f8f;border-radius:1.5px;box-sizing:border-box;"></div>
<div style="left:778px;top:711px;width:7px;height:1.3px;background:#3b4da0;"></div>
<div class="t" style="left:793.5px;top:705.92px;font-size:12.5px;line-height:12.5px;color:#000;font-weight:bold;letter-spacing:0.5px;font-family:"Liberation Sans", sans-serif;">Environment Settings</div>
<div style="left:790px;top:721px;width:1px;height:22px;background:#ebebeb;"></div>
<div style="left:790px;top:721px;width:376px;height:1px;background:#ebebeb;"></div>
<div style="left:790px;top:742px;width:376px;height:1px;background:#ebebeb;"></div>
<div style="left:973px;top:721px;width:1px;height:22px;background:#ebebeb;"></div>
<div class="t" style="left:795px;top:726.92px;font-size:12.5px;line-height:12.5px;color:#000;letter-spacing:0.17px;font-family:"Liberation Sans", sans-serif;">Backgrounds</div>
<div class="t" style="left:978px;top:726.92px;font-size:12.5px;line-height:12.5px;color:#000;letter-spacing:0.17px;font-family:"Liberation Sans", sans-serif;">On</div>
</body></html>
